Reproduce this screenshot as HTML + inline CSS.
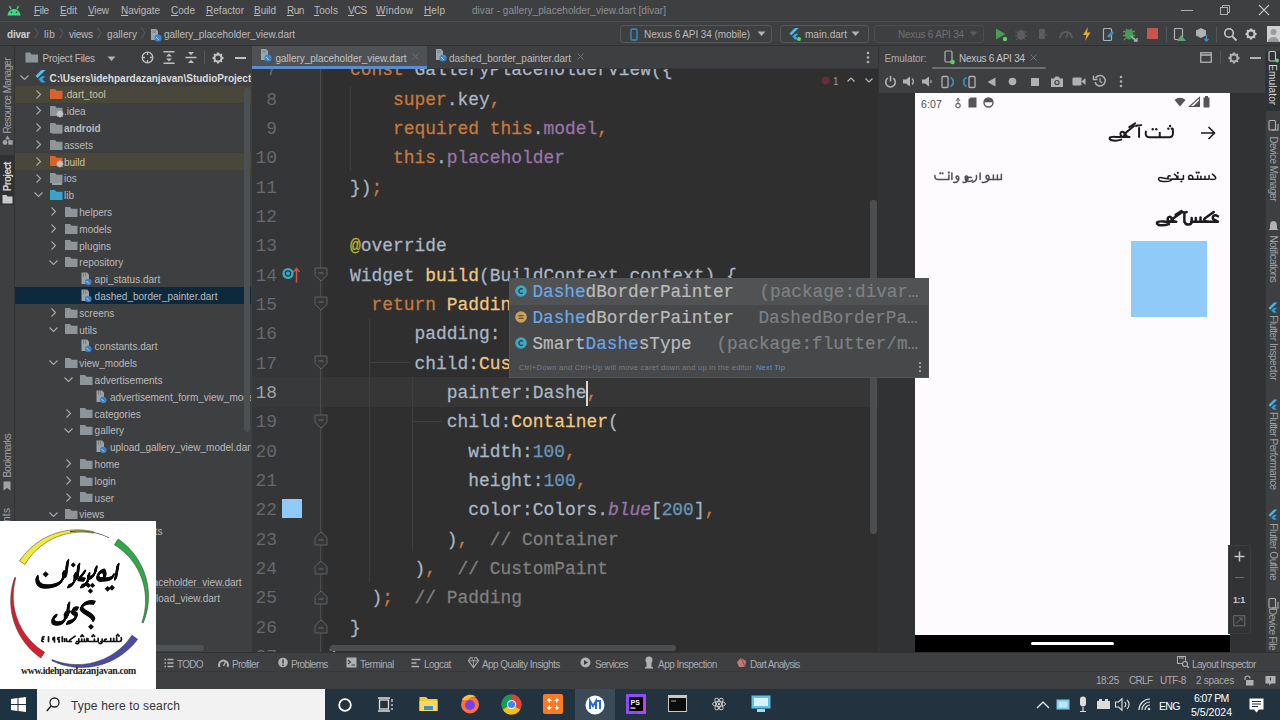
<!DOCTYPE html>
<html><head><meta charset="utf-8">
<style>
*{margin:0;padding:0;box-sizing:border-box}
html,body{width:1280px;height:720px;overflow:hidden;background:#3c3f41;font-family:"Liberation Sans",sans-serif;color:#bbbbbb;position:relative}
.a{position:absolute}
.t{position:absolute;white-space:pre}
svg{overflow:visible}
</style></head>
<body>
<div class="a" style="left:0px;top:0px;width:1280px;height:21px;background:#3e3f41;"></div>
<div class="a" style="left:0px;top:21px;width:1280px;height:25px;background:#3e3f41;"></div>
<div class="a" style="left:0px;top:21px;width:1280px;height:1px;background:#4a4d4f;"></div>
<div class="a" style="left:0px;top:45px;width:1280px;height:1px;background:#2f3133;"></div>
<div class="a" style="left:0px;top:46px;width:15px;height:606px;background:#3e3f41;"></div>
<div class="a" style="left:14px;top:46px;width:1px;height:606px;background:#323436;"></div>
<div class="a" style="left:15px;top:46px;width:237px;height:606px;background:#3e3f41;"></div>
<div class="a" style="left:252px;top:46px;width:627px;height:606px;background:#2f2f2f;"></div>
<div class="a" style="left:878px;top:46px;width:387px;height:606px;background:#313234;"></div>
<div class="a" style="left:878px;top:46px;width:1px;height:606px;background:#323436;"></div>
<div class="a" style="left:1265px;top:46px;width:15px;height:606px;background:#3e3f41;"></div>
<div class="a" style="left:1265px;top:46px;width:1px;height:606px;background:#323436;"></div>
<div class="a" style="left:0px;top:652px;width:1280px;height:19px;background:#3e3f41;"></div>
<div class="a" style="left:0px;top:652px;width:1280px;height:1px;background:#2f3133;"></div>
<div class="a" style="left:0px;top:671px;width:1280px;height:18px;background:#3e3f41;"></div>
<div class="a" style="left:0px;top:671px;width:1280px;height:1px;background:#36383a;"></div>
<div class="a" style="left:0px;top:689px;width:1280px;height:31px;background:#22323f;"></div>
<svg class="a" style="left:6px;top:5px;" width="16" height="11" viewBox="0 0 16 11"><path d="M1.5 10.5 A6.5 6.5 0 0 1 14.5 10.5 Z" fill="#3ddc84"/><line x1="3.5" y1="1" x2="5" y2="4" stroke="#3ddc84" stroke-width="1.2"/><line x1="12.5" y1="1" x2="11" y2="4" stroke="#3ddc84" stroke-width="1.2"/><circle cx="5.5" cy="7.3" r="0.9" fill="#3c3f41"/><circle cx="10.5" cy="7.3" r="0.9" fill="#3c3f41"/></svg>
<div class="t" style="left:34.00px;top:6.03px;font-size:10.00px;line-height:10.00px;color:#bbbbbb;font-family:'Liberation Sans',sans-serif;letter-spacing:-0.318px;"><u style="text-decoration-thickness:1px;text-underline-offset:1px">F</u>ile</div>
<div class="t" style="left:60.00px;top:6.03px;font-size:10.00px;line-height:10.00px;color:#bbbbbb;font-family:'Liberation Sans',sans-serif;letter-spacing:-0.066px;"><u style="text-decoration-thickness:1px;text-underline-offset:1px">E</u>dit</div>
<div class="t" style="left:88.00px;top:6.03px;font-size:10.00px;line-height:10.00px;color:#bbbbbb;font-family:'Liberation Sans',sans-serif;letter-spacing:-0.142px;"><u style="text-decoration-thickness:1px;text-underline-offset:1px">V</u>iew</div>
<div class="t" style="left:121.00px;top:6.03px;font-size:10.00px;line-height:10.00px;color:#bbbbbb;font-family:'Liberation Sans',sans-serif;letter-spacing:-0.062px;"><u style="text-decoration-thickness:1px;text-underline-offset:1px">N</u>avigate</div>
<div class="t" style="left:171.00px;top:6.03px;font-size:10.00px;line-height:10.00px;color:#bbbbbb;font-family:'Liberation Sans',sans-serif;letter-spacing:0.027px;"><u style="text-decoration-thickness:1px;text-underline-offset:1px">C</u>ode</div>
<div class="t" style="left:206.00px;top:6.03px;font-size:10.00px;line-height:10.00px;color:#bbbbbb;font-family:'Liberation Sans',sans-serif;letter-spacing:0.027px;"><u style="text-decoration-thickness:1px;text-underline-offset:1px">R</u>efactor</div>
<div class="t" style="left:254.00px;top:6.03px;font-size:10.00px;line-height:10.00px;color:#bbbbbb;font-family:'Liberation Sans',sans-serif;letter-spacing:-0.053px;"><u style="text-decoration-thickness:1px;text-underline-offset:1px">B</u>uild</div>
<div class="t" style="left:287.00px;top:6.03px;font-size:10.00px;line-height:10.00px;color:#bbbbbb;font-family:'Liberation Sans',sans-serif;letter-spacing:-0.538px;"><u style="text-decoration-thickness:1px;text-underline-offset:1px">R</u>un</div>
<div class="t" style="left:314.00px;top:6.03px;font-size:10.00px;line-height:10.00px;color:#bbbbbb;font-family:'Liberation Sans',sans-serif;letter-spacing:0.145px;"><u style="text-decoration-thickness:1px;text-underline-offset:1px">T</u>ools</div>
<div class="t" style="left:348.00px;top:6.03px;font-size:10.00px;line-height:10.00px;color:#bbbbbb;font-family:'Liberation Sans',sans-serif;letter-spacing:-0.700px;"><u style="text-decoration-thickness:1px;text-underline-offset:1px">V</u>CS</div>
<div class="t" style="left:376.00px;top:6.03px;font-size:10.00px;line-height:10.00px;color:#bbbbbb;font-family:'Liberation Sans',sans-serif;letter-spacing:0.261px;"><u style="text-decoration-thickness:1px;text-underline-offset:1px">W</u>indow</div>
<div class="t" style="left:424.00px;top:6.03px;font-size:10.00px;line-height:10.00px;color:#bbbbbb;font-family:'Liberation Sans',sans-serif;letter-spacing:0.124px;"><u style="text-decoration-thickness:1px;text-underline-offset:1px">H</u>elp</div>
<div class="t" style="left:472.00px;top:6.03px;font-size:10.00px;line-height:10.00px;color:#8e9092;font-family:'Liberation Sans',sans-serif;letter-spacing:0.038px;">divar - gallery_placeholder_view.dart [divar]</div>
<div class="a" style="left:1181px;top:10px;width:12px;height:1px;background:#b0b0b0;"></div>
<svg class="a" style="left:1219px;top:4px;" width="12" height="12" viewBox="0 0 12 12"><rect x="1.5" y="3.5" width="7" height="7" fill="none" stroke="#b0b0b0"/><path d="M3.5 3.5 V1.5 H10.5 V8.5 H8.5" fill="none" stroke="#b0b0b0"/></svg>
<svg class="a" style="left:1258px;top:4px;" width="12" height="12" viewBox="0 0 12 12"><path d="M1 1 L11 11 M11 1 L1 11" stroke="#c0c0c0" stroke-width="1.1"/></svg>
<div class="t" style="left:7.00px;top:29.53px;font-size:10.00px;line-height:10.00px;color:#d0d0d0;font-family:'Liberation Sans',sans-serif;font-weight:bold;letter-spacing:-0.200px;">divar</div>
<svg class="a" style="left:34px;top:27px;" width="5" height="12" viewBox="0 0 5 12"><path d="M0.5 0.5 L4 6 L0.5 11.5" fill="none" stroke="#5a5d5f" stroke-width="1"/></svg>
<div class="t" style="left:44.00px;top:29.53px;font-size:10.00px;line-height:10.00px;color:#bbbbbb;font-family:'Liberation Sans',sans-serif;letter-spacing:0.398px;">lib</div>
<svg class="a" style="left:59px;top:27px;" width="5" height="12" viewBox="0 0 5 12"><path d="M0.5 0.5 L4 6 L0.5 11.5" fill="none" stroke="#5a5d5f" stroke-width="1"/></svg>
<div class="t" style="left:69.00px;top:29.53px;font-size:10.00px;line-height:10.00px;color:#bbbbbb;font-family:'Liberation Sans',sans-serif;letter-spacing:-0.223px;">views</div>
<svg class="a" style="left:97px;top:27px;" width="5" height="12" viewBox="0 0 5 12"><path d="M0.5 0.5 L4 6 L0.5 11.5" fill="none" stroke="#5a5d5f" stroke-width="1"/></svg>
<div class="t" style="left:107.00px;top:29.53px;font-size:10.00px;line-height:10.00px;color:#bbbbbb;font-family:'Liberation Sans',sans-serif;letter-spacing:0.083px;">gallery</div>
<svg class="a" style="left:141px;top:27px;" width="5" height="12" viewBox="0 0 5 12"><path d="M0.5 0.5 L4 6 L0.5 11.5" fill="none" stroke="#5a5d5f" stroke-width="1"/></svg>
<svg class="a" style="left:150px;top:28px;" width="12" height="14" viewBox="0 0 12 14"><path d="M1 1 H6 L8 3 V12 H1 Z" fill="#9aa7b0"/><path d="M3 2 V5 M5 2 V5" stroke="#6e7a82" stroke-width="0.8"/><circle cx="8" cy="10" r="3.6" fill="#3e86c6"/><path d="M6.2 9 L8.6 11.8" stroke="#cde" stroke-width="0.9"/></svg>
<div class="t" style="left:164.00px;top:29.53px;font-size:10.00px;line-height:10.00px;color:#bbbbbb;font-family:'Liberation Sans',sans-serif;letter-spacing:-0.026px;">gallery_placeholder_view.dart</div>
<div class="a" style="left:620px;top:25px;width:152px;height:18px;background:transparent;border:1px solid #555759;border-radius:3px"></div>
<svg class="a" style="left:630px;top:28px;" width="8" height="13" viewBox="0 0 8 13"><rect x="1" y="1" width="6" height="11" rx="1.2" fill="none" stroke="#3592c4" stroke-width="1.3"/></svg>
<div class="t" style="left:644.00px;top:30.03px;font-size:10.00px;line-height:10.00px;color:#bbbbbb;font-family:'Liberation Sans',sans-serif;letter-spacing:-0.081px;">Nexus 6 API 34 (mobile)</div>
<svg class="a" style="left:757px;top:31px;" width="9" height="6" viewBox="0 0 9 6"><path d="M0.5 0.5 H8.5 L4.5 5 Z" fill="#afb1b3"/></svg>
<div class="a" style="left:780px;top:25px;width:89px;height:18px;background:transparent;border:1px solid #555759;border-radius:3px"></div>
<svg class="a" style="left:788px;top:27px;" width="14" height="14" viewBox="0 0 14 14"><path d="M7 1 L1.5 6.5 L3.3 8.3 L10.6 1 Z" fill="#40c4ff"/><path d="M7 6.8 L4.2 9.6 L7 12.4 H10.6 L7.8 9.6 L10.6 6.8 Z" fill="#3aa0d8"/><circle cx="11" cy="12" r="2" fill="#59d65f"/></svg>
<div class="t" style="left:805.00px;top:30.03px;font-size:10.00px;line-height:10.00px;color:#bbbbbb;font-family:'Liberation Sans',sans-serif;letter-spacing:0.037px;">main.dart</div>
<svg class="a" style="left:851px;top:31px;" width="9" height="6" viewBox="0 0 9 6"><path d="M0.5 0.5 H8.5 L4.5 5 Z" fill="#afb1b3"/></svg>
<div class="a" style="left:874px;top:25px;width:110px;height:18px;background:transparent;border:1px solid #4a4c4e;border-radius:3px"></div>
<div class="t" style="left:898.00px;top:30.03px;font-size:10.00px;line-height:10.00px;color:#6e7072;font-family:'Liberation Sans',sans-serif;letter-spacing:-0.217px;">Nexus 6 API 34</div>
<svg class="a" style="left:969px;top:31px;" width="9" height="6" viewBox="0 0 9 6"><path d="M0.5 0.5 H8.5 L4.5 5 Z" fill="#5a5c5e"/></svg>
<svg class="a" style="left:994px;top:27px;" width="14" height="15" viewBox="0 0 14 15"><path d="M2 1.5 L11.5 7 L2 12.5 Z" fill="#499c54"/><circle cx="11" cy="12" r="2.2" fill="#59d65f"/></svg>
<svg class="a" style="left:1014px;top:27px;" width="14" height="14" viewBox="0 0 14 14"><ellipse cx="7" cy="8" rx="4" ry="5" fill="#5a5c5e"/><path d="M1 5 H13 M1 9 H13 M2 13 L4 11 M12 13 L10 11" stroke="#5a5c5e"/></svg>
<svg class="a" style="left:1036px;top:27px;" width="14" height="14" viewBox="0 0 14 14"><path d="M3 2 H9 V12 H3 Z" fill="#5a5c5e"/><path d="M8 5 L12 8 L8 11" fill="#4e5052"/></svg>
<svg class="a" style="left:1058px;top:28px;" width="16" height="12" viewBox="0 0 16 12"><path d="M2 10 A6 6 0 0 1 14 10" fill="none" stroke="#5a5c5e" stroke-width="2"/><path d="M8 10 L10 5" stroke="#5a5c5e" stroke-width="1.5"/></svg>
<svg class="a" style="left:1081px;top:26px;" width="11" height="16" viewBox="0 0 11 16"><path d="M7 1 L2 9 H5.5 L4 15 L9.5 6.5 H6 Z" fill="#f0a732"/></svg>
<svg class="a" style="left:1102px;top:27px;" width="13" height="15" viewBox="0 0 13 15"><rect x="1.5" y="1.5" width="8" height="12" rx="1" fill="none" stroke="#afb1b3" stroke-width="1.2"/><path d="M10 4 L5 9 L7 11 L12 6" fill="#3592c4"/></svg>
<svg class="a" style="left:1122px;top:26px;" width="16" height="16" viewBox="0 0 16 16"><ellipse cx="7" cy="8.5" rx="4" ry="5" fill="#499c54"/><path d="M1 5.5 H13 M1 9.5 H13 M2 14 L4 12 M12 14 L10 12 M4 3 L6 5 M10 3 L8 5" stroke="#499c54" stroke-width="1.3"/><path d="M9 10 L15 15 M12 15 H15 V12" stroke="#afb1b3" stroke-width="1.3" fill="none"/></svg>
<div class="a" style="left:1147px;top:28px;width:11px;height:11px;background:#c75450;"></div>
<div class="a" style="left:1166px;top:27px;width:1px;height:15px;background:#515658;"></div>
<svg class="a" style="left:1173px;top:27px;" width="14" height="15" viewBox="0 0 14 15"><rect x="1.5" y="1.5" width="8" height="11" rx="1" fill="none" stroke="#afb1b3" stroke-width="1.2"/><path d="M4 14 L8 8 L13 14 Z" fill="#59a869"/></svg>
<svg class="a" style="left:1195px;top:27px;" width="15" height="15" viewBox="0 0 15 15"><path d="M6 1 L11 3.5 V8.5 L6 11 L1 8.5 V3.5 Z" fill="#afb1b3"/><path d="M11.5 8 V14 M9.5 12 L11.5 14 L13.5 12" stroke="#3592c4" stroke-width="1.4" fill="none"/></svg>
<div class="a" style="left:1216px;top:27px;width:1px;height:15px;background:#515658;"></div>
<svg class="a" style="left:1223px;top:27px;" width="15" height="15" viewBox="0 0 15 15"><circle cx="6" cy="6" r="4.3" fill="none" stroke="#c8c8c8" stroke-width="1.6"/><path d="M9.2 9.2 L13.5 13.5" stroke="#c8c8c8" stroke-width="1.8"/></svg>
<svg class="a" style="left:1245px;top:28px;" width="12" height="12" viewBox="0 0 12 12"><g transform="scale(1.0)"><circle cx="6" cy="6" r="3.6" fill="none" stroke="#c8c8c8" stroke-width="2.2" stroke-dasharray="0"/><path d="M6 0.5 V2.5 M6 9.5 V11.5 M0.5 6 H2.5 M9.5 6 H11.5 M2.1 2.1 L3.5 3.5 M8.5 8.5 L9.9 9.9 M2.1 9.9 L3.5 8.5 M8.5 3.5 L9.9 2.1" stroke="#c8c8c8" stroke-width="2"/><circle cx="6" cy="6" r="1.4" fill="#3c3f41"/></g></svg>
<svg class="a" style="left:1267px;top:26px;" width="13" height="16" viewBox="0 0 13 16"><rect x="0" y="0" width="13" height="16" fill="#d0d0d0"/><circle cx="6.5" cy="6" r="3" fill="#9a9a9a"/><path d="M1 16 A5.5 5 0 0 1 12 16" fill="#9a9a9a"/></svg>
<div class="t" style="left:-30.35px;top:89.75px;width:75.71px;height:11.50px;font-size:10px;line-height:11.50px;color:#9fa1a3;transform:rotate(-90deg);transform-origin:50% 50%;letter-spacing:-0.584px;">Resource Manager</div>
<svg class="a" style="left:2px;top:135px;" width="11" height="10" viewBox="0 0 11 10"><path d="M5.5 0.5 L8 4.5 H3 Z" fill="#9fa1a3"/><circle cx="3" cy="7.5" r="2.4" fill="#9fa1a3"/><rect x="6.2" y="5.2" width="4.5" height="4.5" fill="#9fa1a3"/></svg>
<div class="a" style="left:0px;top:155px;width:14px;height:50px;background:#2f3234;"></div>
<div class="t" style="left:-7.00px;top:170.75px;width:29.00px;height:11.50px;font-size:10px;line-height:11.50px;color:#d6d6d6;transform:rotate(-90deg);transform-origin:50% 50%;letter-spacing:-0.700px;font-weight:bold;">Project</div>
<svg class="a" style="left:2px;top:194px;" width="11" height="10" viewBox="0 0 11 10"><path d="M0.5 1 H4.5 L5.5 2.5 H10.5 V9.5 H0.5 Z" fill="#c9c9c9"/></svg>
<div class="t" style="left:-14.36px;top:449.50px;width:43.72px;height:11.50px;font-size:10px;line-height:11.50px;color:#9fa1a3;transform:rotate(-90deg);transform-origin:50% 50%;letter-spacing:-0.700px;">Bookmarks</div>
<svg class="a" style="left:3px;top:481px;" width="8" height="10" viewBox="0 0 8 10"><path d="M0.5 0.5 H7.5 V9.5 L4 7 L0.5 9.5 Z" fill="#9fa1a3"/></svg>
<div class="t" style="left:-25.59px;top:535.25px;width:66.19px;height:11.50px;font-size:10px;line-height:11.50px;color:#9fa1a3;transform:rotate(-90deg);transform-origin:50% 50%;letter-spacing:0.373px;">Build Variants</div>
<svg class="a" style="left:25px;top:52px;" width="14" height="11" viewBox="0 0 14 11"><path d="M0.5 0.5 H5 L6.5 2.5 H13 V10.5 H0.5 Z" fill="#8d9599"/></svg>
<div class="t" style="left:42.50px;top:53.53px;font-size:10.00px;line-height:10.00px;color:#bbbbbb;font-family:'Liberation Sans',sans-serif;letter-spacing:-0.201px;">Project Files</div>
<svg class="a" style="left:107px;top:56px;" width="9" height="6" viewBox="0 0 9 6"><path d="M0.5 0.5 H8.5 L4.5 5 Z" fill="#afb1b3"/></svg>
<svg class="a" style="left:141px;top:51px;" width="13" height="13" viewBox="0 0 13 13"><circle cx="6.5" cy="6.5" r="5.3" fill="none" stroke="#c0c0c0" stroke-width="1.3"/><path d="M6.5 1.2 V4 M6.5 9 V11.8 M1.2 6.5 H4 M9 6.5 H11.8" stroke="#c0c0c0" stroke-width="1.3"/></svg>
<svg class="a" style="left:163px;top:51px;" width="12" height="13" viewBox="0 0 12 13"><path d="M0.5 0.8 H11.5 M0.5 12.2 H11.5" stroke="#c0c0c0" stroke-width="1.5"/><path d="M3 5.5 L6 2.5 L9 5.5 Z M3 7.5 L6 10.5 L9 7.5 Z" fill="#c0c0c0"/></svg>
<svg class="a" style="left:185px;top:51px;" width="12" height="13" viewBox="0 0 12 13"><path d="M0.5 6.5 H11.5" stroke="#c0c0c0" stroke-width="1.5"/><path d="M3 1 H9 L6 4.3 Z M3 12 H9 L6 8.7 Z" fill="#c0c0c0"/></svg>
<div class="a" style="left:204px;top:51px;width:1px;height:13px;background:#55585a;"></div>
<svg class="a" style="left:212px;top:52px;" width="12" height="12" viewBox="0 0 12 12"><g transform="scale(1.0)"><circle cx="6" cy="6" r="3.6" fill="none" stroke="#c0c0c0" stroke-width="2.2" stroke-dasharray="0"/><path d="M6 0.5 V2.5 M6 9.5 V11.5 M0.5 6 H2.5 M9.5 6 H11.5 M2.1 2.1 L3.5 3.5 M8.5 8.5 L9.9 9.9 M2.1 9.9 L3.5 8.5 M8.5 3.5 L9.9 2.1" stroke="#c0c0c0" stroke-width="2"/><circle cx="6" cy="6" r="1.4" fill="#3c3f41"/></g></svg>
<div class="a" style="left:235px;top:57px;width:11px;height:1.6px;background:#c0c0c0;"></div>
<div class="a" style="left:15px;top:69px;width:236px;height:583px;overflow:hidden">
<div class="a" style="left:0px;top:16.599999999999994px;width:236px;height:17px;background:#49473a;"></div>
<div class="a" style="left:0px;top:83.80000000000001px;width:236px;height:17px;background:#49473a;"></div>
<div class="a" style="left:0px;top:218.2px;width:236px;height:17px;background:#0d293e;"></div>
<svg class="a" style="left:4.5px;top:5.799999999999997px;" width="9" height="5" viewBox="0 0 9 5"><path d="M0.5 0.5 L4.5 4.5 L8.5 0.5" fill="none" stroke="#a8aaac" stroke-width="1.1"/></svg>
<svg class="a" style="left:20px;top:1.2999999999999972px;" width="11" height="14" viewBox="0 0 11 14"><path d="M6.5 0 L0.5 6 L2.5 8 L10.5 0 Z" fill="#48c4f6"/><path d="M6.5 6.2 L3.5 9.2 L6.5 12.5 H10.5 L7.3 9.2 L10.5 6.2 Z" fill="#2fa4e0"/></svg>
<div class="t" style="left:34.50px;top:4.63px;font-size:10.00px;line-height:10.00px;color:#dcdcdc;font-family:'Liberation Sans',sans-serif;font-weight:bold;">C:\Users\idehpardazanjavan\StudioProjects\divar</div>
<svg class="a" style="left:21.0px;top:20.599999999999994px;" width="5" height="9" viewBox="0 0 5 9"><path d="M0.5 0.5 L4.5 4.5 L0.5 8.5" fill="none" stroke="#a8aaac" stroke-width="1.1"/></svg>
<svg class="a" style="left:35px;top:20.099999999999994px;" width="13" height="10" viewBox="0 0 13 10"><path d="M0 0 H5 L6.5 1.8 H12.5 V10 H0 Z" fill="#d6622c"/></svg>
<div class="t" style="left:49.00px;top:21.43px;font-size:10.00px;line-height:10.00px;color:#c9c3a6;font-family:'Liberation Sans',sans-serif;">.dart_tool</div>
<svg class="a" style="left:21.0px;top:37.400000000000006px;" width="5" height="9" viewBox="0 0 5 9"><path d="M0.5 0.5 L4.5 4.5 L0.5 8.5" fill="none" stroke="#a8aaac" stroke-width="1.1"/></svg>
<svg class="a" style="left:35px;top:36.900000000000006px;" width="13" height="10" viewBox="0 0 13 10"><path d="M0 0 H5 L6.5 1.8 H12.5 V10 H0 Z" fill="#8d9599"/></svg>
<svg class="a" style="left:41px;top:40.900000000000006px;" width="8" height="8" viewBox="0 0 8 8"><circle cx="4" cy="4" r="2.2" fill="none" stroke="#c8c8c8" stroke-width="1.4"/><path d="M4 0.3 V7.7 M0.3 4 H7.7 M1.4 1.4 L6.6 6.6 M6.6 1.4 L1.4 6.6" stroke="#c8c8c8" stroke-width="0.9"/></svg>
<div class="t" style="left:49.00px;top:38.23px;font-size:10.00px;line-height:10.00px;color:#bbbbbb;font-family:'Liberation Sans',sans-serif;">.idea</div>
<svg class="a" style="left:21.0px;top:54.2px;" width="5" height="9" viewBox="0 0 5 9"><path d="M0.5 0.5 L4.5 4.5 L0.5 8.5" fill="none" stroke="#a8aaac" stroke-width="1.1"/></svg>
<svg class="a" style="left:35px;top:53.7px;" width="13" height="10" viewBox="0 0 13 10"><path d="M0 0 H5 L6.5 1.8 H12.5 V10 H0 Z" fill="#8d9599"/></svg>
<div class="a" style="left:37px;top:63.69999999999999px;width:10px;height:1.5px;background:#3a9a5a;"></div>
<div class="t" style="left:49.00px;top:55.03px;font-size:10.00px;line-height:10.00px;color:#bbbbbb;font-family:'Liberation Sans',sans-serif;font-weight:bold;">android</div>
<svg class="a" style="left:21.0px;top:71.0px;" width="5" height="9" viewBox="0 0 5 9"><path d="M0.5 0.5 L4.5 4.5 L0.5 8.5" fill="none" stroke="#a8aaac" stroke-width="1.1"/></svg>
<svg class="a" style="left:35px;top:70.5px;" width="13" height="10" viewBox="0 0 13 10"><path d="M0 0 H5 L6.5 1.8 H12.5 V10 H0 Z" fill="#8d9599"/></svg>
<div class="t" style="left:49.00px;top:71.83px;font-size:10.00px;line-height:10.00px;color:#bbbbbb;font-family:'Liberation Sans',sans-serif;">assets</div>
<svg class="a" style="left:21.0px;top:87.80000000000001px;" width="5" height="9" viewBox="0 0 5 9"><path d="M0.5 0.5 L4.5 4.5 L0.5 8.5" fill="none" stroke="#a8aaac" stroke-width="1.1"/></svg>
<svg class="a" style="left:35px;top:87.30000000000001px;" width="13" height="10" viewBox="0 0 13 10"><path d="M0 0 H5 L6.5 1.8 H12.5 V10 H0 Z" fill="#d6622c"/></svg>
<svg class="a" style="left:41px;top:91.30000000000001px;" width="8" height="8" viewBox="0 0 8 8"><circle cx="4" cy="4" r="2.2" fill="none" stroke="#c8c8c8" stroke-width="1.4"/><path d="M4 0.3 V7.7 M0.3 4 H7.7 M1.4 1.4 L6.6 6.6 M6.6 1.4 L1.4 6.6" stroke="#c8c8c8" stroke-width="0.9"/></svg>
<div class="t" style="left:49.00px;top:88.63px;font-size:10.00px;line-height:10.00px;color:#c9c3a6;font-family:'Liberation Sans',sans-serif;">build</div>
<svg class="a" style="left:21.0px;top:104.60000000000002px;" width="5" height="9" viewBox="0 0 5 9"><path d="M0.5 0.5 L4.5 4.5 L0.5 8.5" fill="none" stroke="#a8aaac" stroke-width="1.1"/></svg>
<svg class="a" style="left:35px;top:104.10000000000002px;" width="13" height="10" viewBox="0 0 13 10"><path d="M0 0 H5 L6.5 1.8 H12.5 V10 H0 Z" fill="#8d9599"/></svg>
<div class="a" style="left:37px;top:114.10000000000002px;width:10px;height:1.5px;background:#9aa0a4;"></div>
<div class="t" style="left:49.00px;top:105.43px;font-size:10.00px;line-height:10.00px;color:#bbbbbb;font-family:'Liberation Sans',sans-serif;">ios</div>
<svg class="a" style="left:19.0px;top:123.4px;" width="9" height="5" viewBox="0 0 9 5"><path d="M0.5 0.5 L4.5 4.5 L8.5 0.5" fill="none" stroke="#a8aaac" stroke-width="1.1"/></svg>
<svg class="a" style="left:35px;top:120.9px;" width="13" height="10" viewBox="0 0 13 10"><path d="M0 0 H5 L6.5 1.8 H12.5 V10 H0 Z" fill="#3aa3c9"/></svg>
<div class="t" style="left:49.00px;top:122.23px;font-size:10.00px;line-height:10.00px;color:#bbbbbb;font-family:'Liberation Sans',sans-serif;">lib</div>
<svg class="a" style="left:36.0px;top:138.2px;" width="5" height="9" viewBox="0 0 5 9"><path d="M0.5 0.5 L4.5 4.5 L0.5 8.5" fill="none" stroke="#a8aaac" stroke-width="1.1"/></svg>
<svg class="a" style="left:50px;top:137.7px;" width="13" height="10" viewBox="0 0 13 10"><path d="M0 0 H5 L6.5 1.8 H12.5 V10 H0 Z" fill="#8d9599"/></svg>
<div class="t" style="left:64.30px;top:139.03px;font-size:10.00px;line-height:10.00px;color:#bbbbbb;font-family:'Liberation Sans',sans-serif;">helpers</div>
<svg class="a" style="left:36.0px;top:155.0px;" width="5" height="9" viewBox="0 0 5 9"><path d="M0.5 0.5 L4.5 4.5 L0.5 8.5" fill="none" stroke="#a8aaac" stroke-width="1.1"/></svg>
<svg class="a" style="left:50px;top:154.5px;" width="13" height="10" viewBox="0 0 13 10"><path d="M0 0 H5 L6.5 1.8 H12.5 V10 H0 Z" fill="#8d9599"/></svg>
<div class="t" style="left:64.30px;top:155.83px;font-size:10.00px;line-height:10.00px;color:#bbbbbb;font-family:'Liberation Sans',sans-serif;">models</div>
<svg class="a" style="left:36.0px;top:171.8px;" width="5" height="9" viewBox="0 0 5 9"><path d="M0.5 0.5 L4.5 4.5 L0.5 8.5" fill="none" stroke="#a8aaac" stroke-width="1.1"/></svg>
<svg class="a" style="left:50px;top:171.3px;" width="13" height="10" viewBox="0 0 13 10"><path d="M0 0 H5 L6.5 1.8 H12.5 V10 H0 Z" fill="#8d9599"/></svg>
<div class="t" style="left:64.30px;top:172.63px;font-size:10.00px;line-height:10.00px;color:#bbbbbb;font-family:'Liberation Sans',sans-serif;">plugins</div>
<svg class="a" style="left:34.0px;top:190.60000000000002px;" width="9" height="5" viewBox="0 0 9 5"><path d="M0.5 0.5 L4.5 4.5 L8.5 0.5" fill="none" stroke="#a8aaac" stroke-width="1.1"/></svg>
<svg class="a" style="left:50px;top:188.10000000000002px;" width="13" height="10" viewBox="0 0 13 10"><path d="M0 0 H5 L6.5 1.8 H12.5 V10 H0 Z" fill="#8d9599"/></svg>
<div class="t" style="left:64.30px;top:189.43px;font-size:10.00px;line-height:10.00px;color:#bbbbbb;font-family:'Liberation Sans',sans-serif;">repository</div>
<svg class="a" style="left:66px;top:202.90000000000003px;" width="11" height="14" viewBox="0 0 11 14"><path d="M0.5 0.5 H6 L8 2.5 V12 H0.5 Z" fill="#9aa3a8"/><path d="M2.5 1 V5 M4.5 1 V5" stroke="#6a7276" stroke-width="0.7"/><circle cx="7.3" cy="10" r="3.3" fill="#3d7fc0"/><path d="M5.6 9.1 L8 11.5" stroke="#dbe8f5" stroke-width="0.9"/></svg>
<div class="t" style="left:79.60px;top:206.23px;font-size:10.00px;line-height:10.00px;color:#bbbbbb;font-family:'Liberation Sans',sans-serif;">api_status.dart</div>
<svg class="a" style="left:66px;top:219.7px;" width="11" height="14" viewBox="0 0 11 14"><path d="M0.5 0.5 H6 L8 2.5 V12 H0.5 Z" fill="#9aa3a8"/><path d="M2.5 1 V5 M4.5 1 V5" stroke="#6a7276" stroke-width="0.7"/><circle cx="7.3" cy="10" r="3.3" fill="#3d7fc0"/><path d="M5.6 9.1 L8 11.5" stroke="#dbe8f5" stroke-width="0.9"/></svg>
<div class="t" style="left:79.60px;top:223.03px;font-size:10.00px;line-height:10.00px;color:#bbbbbb;font-family:'Liberation Sans',sans-serif;">dashed_border_painter.dart</div>
<svg class="a" style="left:36.0px;top:239.0px;" width="5" height="9" viewBox="0 0 5 9"><path d="M0.5 0.5 L4.5 4.5 L0.5 8.5" fill="none" stroke="#a8aaac" stroke-width="1.1"/></svg>
<svg class="a" style="left:50px;top:238.5px;" width="13" height="10" viewBox="0 0 13 10"><path d="M0 0 H5 L6.5 1.8 H12.5 V10 H0 Z" fill="#8d9599"/></svg>
<div class="t" style="left:64.30px;top:239.83px;font-size:10.00px;line-height:10.00px;color:#bbbbbb;font-family:'Liberation Sans',sans-serif;">screens</div>
<svg class="a" style="left:34.0px;top:257.8px;" width="9" height="5" viewBox="0 0 9 5"><path d="M0.5 0.5 L4.5 4.5 L8.5 0.5" fill="none" stroke="#a8aaac" stroke-width="1.1"/></svg>
<svg class="a" style="left:50px;top:255.3px;" width="13" height="10" viewBox="0 0 13 10"><path d="M0 0 H5 L6.5 1.8 H12.5 V10 H0 Z" fill="#8d9599"/></svg>
<div class="t" style="left:64.30px;top:256.63px;font-size:10.00px;line-height:10.00px;color:#bbbbbb;font-family:'Liberation Sans',sans-serif;">utils</div>
<svg class="a" style="left:66px;top:270.1px;" width="11" height="14" viewBox="0 0 11 14"><path d="M0.5 0.5 H6 L8 2.5 V12 H0.5 Z" fill="#9aa3a8"/><path d="M2.5 1 V5 M4.5 1 V5" stroke="#6a7276" stroke-width="0.7"/><circle cx="7.3" cy="10" r="3.3" fill="#3d7fc0"/><path d="M5.6 9.1 L8 11.5" stroke="#dbe8f5" stroke-width="0.9"/></svg>
<div class="t" style="left:79.60px;top:273.43px;font-size:10.00px;line-height:10.00px;color:#bbbbbb;font-family:'Liberation Sans',sans-serif;">constants.dart</div>
<svg class="a" style="left:34.0px;top:291.40000000000003px;" width="9" height="5" viewBox="0 0 9 5"><path d="M0.5 0.5 L4.5 4.5 L8.5 0.5" fill="none" stroke="#a8aaac" stroke-width="1.1"/></svg>
<svg class="a" style="left:50px;top:288.90000000000003px;" width="13" height="10" viewBox="0 0 13 10"><path d="M0 0 H5 L6.5 1.8 H12.5 V10 H0 Z" fill="#8d9599"/></svg>
<div class="t" style="left:64.30px;top:290.23px;font-size:10.00px;line-height:10.00px;color:#bbbbbb;font-family:'Liberation Sans',sans-serif;">view_models</div>
<svg class="a" style="left:49.0px;top:308.20000000000005px;" width="9" height="5" viewBox="0 0 9 5"><path d="M0.5 0.5 L4.5 4.5 L8.5 0.5" fill="none" stroke="#a8aaac" stroke-width="1.1"/></svg>
<svg class="a" style="left:65px;top:305.70000000000005px;" width="13" height="10" viewBox="0 0 13 10"><path d="M0 0 H5 L6.5 1.8 H12.5 V10 H0 Z" fill="#8d9599"/></svg>
<div class="t" style="left:79.60px;top:307.03px;font-size:10.00px;line-height:10.00px;color:#bbbbbb;font-family:'Liberation Sans',sans-serif;">advertisements</div>
<svg class="a" style="left:81px;top:320.5px;" width="11" height="14" viewBox="0 0 11 14"><path d="M0.5 0.5 H6 L8 2.5 V12 H0.5 Z" fill="#9aa3a8"/><path d="M2.5 1 V5 M4.5 1 V5" stroke="#6a7276" stroke-width="0.7"/><circle cx="7.3" cy="10" r="3.3" fill="#3d7fc0"/><path d="M5.6 9.1 L8 11.5" stroke="#dbe8f5" stroke-width="0.9"/></svg>
<div class="t" style="left:94.90px;top:323.83px;font-size:10.00px;line-height:10.00px;color:#bbbbbb;font-family:'Liberation Sans',sans-serif;">advertisement_form_view_model.dart</div>
<svg class="a" style="left:51.0px;top:339.8px;" width="5" height="9" viewBox="0 0 5 9"><path d="M0.5 0.5 L4.5 4.5 L0.5 8.5" fill="none" stroke="#a8aaac" stroke-width="1.1"/></svg>
<svg class="a" style="left:65px;top:339.3px;" width="13" height="10" viewBox="0 0 13 10"><path d="M0 0 H5 L6.5 1.8 H12.5 V10 H0 Z" fill="#8d9599"/></svg>
<div class="t" style="left:79.60px;top:340.63px;font-size:10.00px;line-height:10.00px;color:#bbbbbb;font-family:'Liberation Sans',sans-serif;">categories</div>
<svg class="a" style="left:49.0px;top:358.6px;" width="9" height="5" viewBox="0 0 9 5"><path d="M0.5 0.5 L4.5 4.5 L8.5 0.5" fill="none" stroke="#a8aaac" stroke-width="1.1"/></svg>
<svg class="a" style="left:65px;top:356.1px;" width="13" height="10" viewBox="0 0 13 10"><path d="M0 0 H5 L6.5 1.8 H12.5 V10 H0 Z" fill="#8d9599"/></svg>
<div class="t" style="left:79.60px;top:357.43px;font-size:10.00px;line-height:10.00px;color:#bbbbbb;font-family:'Liberation Sans',sans-serif;">gallery</div>
<svg class="a" style="left:81px;top:370.90000000000003px;" width="11" height="14" viewBox="0 0 11 14"><path d="M0.5 0.5 H6 L8 2.5 V12 H0.5 Z" fill="#9aa3a8"/><path d="M2.5 1 V5 M4.5 1 V5" stroke="#6a7276" stroke-width="0.7"/><circle cx="7.3" cy="10" r="3.3" fill="#3d7fc0"/><path d="M5.6 9.1 L8 11.5" stroke="#dbe8f5" stroke-width="0.9"/></svg>
<div class="t" style="left:94.90px;top:374.23px;font-size:10.00px;line-height:10.00px;color:#bbbbbb;font-family:'Liberation Sans',sans-serif;">upload_gallery_view_model.dart</div>
<svg class="a" style="left:51.0px;top:390.20000000000005px;" width="5" height="9" viewBox="0 0 5 9"><path d="M0.5 0.5 L4.5 4.5 L0.5 8.5" fill="none" stroke="#a8aaac" stroke-width="1.1"/></svg>
<svg class="a" style="left:65px;top:389.70000000000005px;" width="13" height="10" viewBox="0 0 13 10"><path d="M0 0 H5 L6.5 1.8 H12.5 V10 H0 Z" fill="#8d9599"/></svg>
<div class="t" style="left:79.60px;top:391.03px;font-size:10.00px;line-height:10.00px;color:#bbbbbb;font-family:'Liberation Sans',sans-serif;">home</div>
<svg class="a" style="left:51.0px;top:407.00000000000006px;" width="5" height="9" viewBox="0 0 5 9"><path d="M0.5 0.5 L4.5 4.5 L0.5 8.5" fill="none" stroke="#a8aaac" stroke-width="1.1"/></svg>
<svg class="a" style="left:65px;top:406.50000000000006px;" width="13" height="10" viewBox="0 0 13 10"><path d="M0 0 H5 L6.5 1.8 H12.5 V10 H0 Z" fill="#8d9599"/></svg>
<div class="t" style="left:79.60px;top:407.83px;font-size:10.00px;line-height:10.00px;color:#bbbbbb;font-family:'Liberation Sans',sans-serif;">login</div>
<svg class="a" style="left:51.0px;top:423.8px;" width="5" height="9" viewBox="0 0 5 9"><path d="M0.5 0.5 L4.5 4.5 L0.5 8.5" fill="none" stroke="#a8aaac" stroke-width="1.1"/></svg>
<svg class="a" style="left:65px;top:423.3px;" width="13" height="10" viewBox="0 0 13 10"><path d="M0 0 H5 L6.5 1.8 H12.5 V10 H0 Z" fill="#8d9599"/></svg>
<div class="t" style="left:79.60px;top:424.63px;font-size:10.00px;line-height:10.00px;color:#bbbbbb;font-family:'Liberation Sans',sans-serif;">user</div>
<svg class="a" style="left:34.0px;top:442.6px;" width="9" height="5" viewBox="0 0 9 5"><path d="M0.5 0.5 L4.5 4.5 L8.5 0.5" fill="none" stroke="#a8aaac" stroke-width="1.1"/></svg>
<svg class="a" style="left:50px;top:440.1px;" width="13" height="10" viewBox="0 0 13 10"><path d="M0 0 H5 L6.5 1.8 H12.5 V10 H0 Z" fill="#8d9599"/></svg>
<div class="t" style="left:64.30px;top:441.43px;font-size:10.00px;line-height:10.00px;color:#bbbbbb;font-family:'Liberation Sans',sans-serif;">views</div>
<svg class="a" style="left:51.0px;top:457.4px;" width="5" height="9" viewBox="0 0 5 9"><path d="M0.5 0.5 L4.5 4.5 L0.5 8.5" fill="none" stroke="#a8aaac" stroke-width="1.1"/></svg>
<svg class="a" style="left:65px;top:456.9px;" width="13" height="10" viewBox="0 0 13 10"><path d="M0 0 H5 L6.5 1.8 H12.5 V10 H0 Z" fill="#8d9599"/></svg>
<div class="t" style="left:79.60px;top:458.23px;font-size:10.00px;line-height:10.00px;color:#bbbbbb;font-family:'Liberation Sans',sans-serif;">advertisements</div>
<svg class="a" style="left:51.0px;top:474.20000000000005px;" width="5" height="9" viewBox="0 0 5 9"><path d="M0.5 0.5 L4.5 4.5 L0.5 8.5" fill="none" stroke="#a8aaac" stroke-width="1.1"/></svg>
<svg class="a" style="left:65px;top:473.70000000000005px;" width="13" height="10" viewBox="0 0 13 10"><path d="M0 0 H5 L6.5 1.8 H12.5 V10 H0 Z" fill="#8d9599"/></svg>
<div class="t" style="left:79.60px;top:475.03px;font-size:10.00px;line-height:10.00px;color:#bbbbbb;font-family:'Liberation Sans',sans-serif;">categories</div>
<svg class="a" style="left:49.0px;top:493.0px;" width="9" height="5" viewBox="0 0 9 5"><path d="M0.5 0.5 L4.5 4.5 L8.5 0.5" fill="none" stroke="#a8aaac" stroke-width="1.1"/></svg>
<svg class="a" style="left:65px;top:490.5px;" width="13" height="10" viewBox="0 0 13 10"><path d="M0 0 H5 L6.5 1.8 H12.5 V10 H0 Z" fill="#8d9599"/></svg>
<div class="t" style="left:79.60px;top:491.83px;font-size:10.00px;line-height:10.00px;color:#bbbbbb;font-family:'Liberation Sans',sans-serif;">gallery</div>
<svg class="a" style="left:81px;top:505.29999999999995px;" width="11" height="14" viewBox="0 0 11 14"><path d="M0.5 0.5 H6 L8 2.5 V12 H0.5 Z" fill="#9aa3a8"/><path d="M2.5 1 V5 M4.5 1 V5" stroke="#6a7276" stroke-width="0.7"/><circle cx="7.3" cy="10" r="3.3" fill="#3d7fc0"/><path d="M5.6 9.1 L8 11.5" stroke="#dbe8f5" stroke-width="0.9"/></svg>
<div class="t" style="left:94.90px;top:508.63px;font-size:10.00px;line-height:10.00px;color:#bbbbbb;font-family:'Liberation Sans',sans-serif;">gallery_placeholder_view.dart</div>
<div class="a" style="left:94.89999999999999px;top:518.3px;width:131px;height:1px;background:#8a3c4a;"></div>
<svg class="a" style="left:81px;top:522.1px;" width="11" height="14" viewBox="0 0 11 14"><path d="M0.5 0.5 H6 L8 2.5 V12 H0.5 Z" fill="#9aa3a8"/><path d="M2.5 1 V5 M4.5 1 V5" stroke="#6a7276" stroke-width="0.7"/><circle cx="7.3" cy="10" r="3.3" fill="#3d7fc0"/><path d="M5.6 9.1 L8 11.5" stroke="#dbe8f5" stroke-width="0.9"/></svg>
<div class="t" style="left:94.90px;top:525.43px;font-size:10.00px;line-height:10.00px;color:#bbbbbb;font-family:'Liberation Sans',sans-serif;">gallery_upload_view.dart</div>
</div>
<div class="a" style="left:244px;top:88px;width:6px;height:344px;background:#4d5052;border-radius:3px"></div>
<div class="a" style="left:20px;top:645px;width:184px;height:6px;background:#505355;border-radius:3px"></div>
<div class="a" style="left:252px;top:46px;width:626px;height:23px;background:#3e3f41;"></div>
<div class="a" style="left:252px;top:68px;width:626px;height:1px;background:#36373a;"></div>
<div class="a" style="left:252px;top:46px;width:175px;height:20px;background:#4e5254;"></div>
<div class="a" style="left:252px;top:65.5px;width:175px;height:3.5px;background:#5b8bd0;"></div>
<svg class="a" style="left:260px;top:48px;" width="12" height="14" viewBox="0 0 12 14"><path d="M1 1 H6 L8 3 V12 H1 Z" fill="#9aa7b0"/><path d="M3 2 V5 M5 2 V5" stroke="#6e7a82" stroke-width="0.8"/><circle cx="8" cy="10" r="3.6" fill="#3e86c6"/><path d="M6.2 9 L8.6 11.8" stroke="#cde" stroke-width="0.9"/></svg>
<div class="t" style="left:275.50px;top:54.03px;font-size:10.00px;line-height:10.00px;color:#c4c4c4;font-family:'Liberation Sans',sans-serif;letter-spacing:-0.026px;">gallery_placeholder_view.dart</div>
<svg class="a" style="left:412px;top:53px;" width="7" height="7" viewBox="0 0 7 7"><path d="M0.5 0.5 L6.5 6.5 M6.5 0.5 L0.5 6.5" stroke="#6f7274" stroke-width="1"/></svg>
<svg class="a" style="left:435px;top:48px;" width="12" height="14" viewBox="0 0 12 14"><path d="M1 1 H6 L8 3 V12 H1 Z" fill="#9aa7b0"/><path d="M3 2 V5 M5 2 V5" stroke="#6e7a82" stroke-width="0.8"/><circle cx="8" cy="10" r="3.6" fill="#3e86c6"/><path d="M6.2 9 L8.6 11.8" stroke="#cde" stroke-width="0.9"/></svg>
<div class="t" style="left:449.00px;top:54.03px;font-size:10.00px;line-height:10.00px;color:#bbbbbb;font-family:'Liberation Sans',sans-serif;letter-spacing:-0.034px;">dashed_border_painter.dart</div>
<svg class="a" style="left:577px;top:53px;" width="7" height="7" viewBox="0 0 7 7"><path d="M0.5 0.5 L6.5 6.5 M6.5 0.5 L0.5 6.5" stroke="#6f7274" stroke-width="1"/></svg>
<svg class="a" style="left:866px;top:51px;" width="4" height="13" viewBox="0 0 4 13"><circle cx="2" cy="2" r="1.3" fill="#afb1b3"/><circle cx="2" cy="6.5" r="1.3" fill="#afb1b3"/><circle cx="2" cy="11" r="1.3" fill="#afb1b3"/></svg>
<div class="a" style="left:252px;top:69px;width:626px;height:583px;overflow:hidden;background:#2f2f2f">
<div class="a" style="left:0px;top:0px;width:70.5px;height:583px;background:#353638;"></div>
<div class="a" style="left:70.5px;top:307.99999999999994px;width:556px;height:29.6px;background:#363636;"></div>
<div class="a" style="left:0px;top:307.99999999999994px;width:70.5px;height:29.6px;background:#38393b;"></div>
<div class="a" style="left:68px;top:0px;width:1.2px;height:583px;background:#4a4b4d;"></div>
<div class="t" style="left:14.25px;top:-6.76px;font-size:17.92px;line-height:17.92px;color:#66696b;font-family:'Liberation Mono',monospace;">7</div>
<div class="t" style="left:14.25px;top:22.57px;font-size:17.92px;line-height:17.92px;color:#66696b;font-family:'Liberation Mono',monospace;">8</div>
<div class="t" style="left:14.25px;top:51.90px;font-size:17.92px;line-height:17.92px;color:#66696b;font-family:'Liberation Mono',monospace;">9</div>
<div class="t" style="left:3.49px;top:81.23px;font-size:17.92px;line-height:17.92px;color:#66696b;font-family:'Liberation Mono',monospace;">10</div>
<div class="t" style="left:3.49px;top:110.56px;font-size:17.92px;line-height:17.92px;color:#66696b;font-family:'Liberation Mono',monospace;">11</div>
<div class="t" style="left:3.49px;top:139.89px;font-size:17.92px;line-height:17.92px;color:#66696b;font-family:'Liberation Mono',monospace;">12</div>
<div class="t" style="left:3.49px;top:169.22px;font-size:17.92px;line-height:17.92px;color:#66696b;font-family:'Liberation Mono',monospace;">13</div>
<div class="t" style="left:3.49px;top:198.55px;font-size:17.92px;line-height:17.92px;color:#66696b;font-family:'Liberation Mono',monospace;">14</div>
<div class="t" style="left:3.49px;top:227.88px;font-size:17.92px;line-height:17.92px;color:#66696b;font-family:'Liberation Mono',monospace;">15</div>
<div class="t" style="left:3.49px;top:257.21px;font-size:17.92px;line-height:17.92px;color:#66696b;font-family:'Liberation Mono',monospace;">16</div>
<div class="t" style="left:3.49px;top:286.54px;font-size:17.92px;line-height:17.92px;color:#66696b;font-family:'Liberation Mono',monospace;">17</div>
<div class="t" style="left:3.49px;top:315.87px;font-size:17.92px;line-height:17.92px;color:#a4a3a3;font-family:'Liberation Mono',monospace;">18</div>
<div class="t" style="left:3.49px;top:345.20px;font-size:17.92px;line-height:17.92px;color:#66696b;font-family:'Liberation Mono',monospace;">19</div>
<div class="t" style="left:3.49px;top:374.53px;font-size:17.92px;line-height:17.92px;color:#66696b;font-family:'Liberation Mono',monospace;">20</div>
<div class="t" style="left:3.49px;top:403.86px;font-size:17.92px;line-height:17.92px;color:#66696b;font-family:'Liberation Mono',monospace;">21</div>
<div class="t" style="left:3.49px;top:433.19px;font-size:17.92px;line-height:17.92px;color:#66696b;font-family:'Liberation Mono',monospace;">22</div>
<div class="t" style="left:3.49px;top:462.52px;font-size:17.92px;line-height:17.92px;color:#66696b;font-family:'Liberation Mono',monospace;">23</div>
<div class="t" style="left:3.49px;top:491.85px;font-size:17.92px;line-height:17.92px;color:#66696b;font-family:'Liberation Mono',monospace;">24</div>
<div class="t" style="left:3.49px;top:521.18px;font-size:17.92px;line-height:17.92px;color:#66696b;font-family:'Liberation Mono',monospace;">25</div>
<div class="t" style="left:3.49px;top:550.51px;font-size:17.92px;line-height:17.92px;color:#66696b;font-family:'Liberation Mono',monospace;">26</div>
<div class="t" style="left:3.49px;top:579.84px;font-size:17.92px;line-height:17.92px;color:#66696b;font-family:'Liberation Mono',monospace;">27</div>
<svg class="a" style="left:62px;top:197.98000000000002px;" width="14" height="15" viewBox="0 0 14 15"><path d="M1 1 H13 V8.5 L7 14 L1 8.5 Z" fill="#353638" stroke="#5e6163" stroke-width="1"/><path d="M4.5 6 H9.5" stroke="#6a6d6f" stroke-width="1"/></svg>
<svg class="a" style="left:62px;top:227.31px;" width="14" height="15" viewBox="0 0 14 15"><path d="M1 1 H13 V8.5 L7 14 L1 8.5 Z" fill="#353638" stroke="#5e6163" stroke-width="1"/><path d="M4.5 6 H9.5" stroke="#6a6d6f" stroke-width="1"/></svg>
<svg class="a" style="left:62px;top:285.96999999999997px;" width="14" height="15" viewBox="0 0 14 15"><path d="M1 1 H13 V8.5 L7 14 L1 8.5 Z" fill="#353638" stroke="#5e6163" stroke-width="1"/><path d="M4.5 6 H9.5" stroke="#6a6d6f" stroke-width="1"/></svg>
<svg class="a" style="left:62px;top:344.63px;" width="14" height="15" viewBox="0 0 14 15"><path d="M1 1 H13 V8.5 L7 14 L1 8.5 Z" fill="#353638" stroke="#5e6163" stroke-width="1"/><path d="M4.5 6 H9.5" stroke="#6a6d6f" stroke-width="1"/></svg>
<svg class="a" style="left:62px;top:461.95000000000005px;" width="14" height="15" viewBox="0 0 14 15"><path d="M1 14 H13 V6.5 L7 1 L1 6.5 Z" fill="#353638" stroke="#5e6163" stroke-width="1"/><path d="M4.5 9 H9.5" stroke="#6a6d6f" stroke-width="1"/></svg>
<svg class="a" style="left:62px;top:491.28px;" width="14" height="15" viewBox="0 0 14 15"><path d="M1 14 H13 V6.5 L7 1 L1 6.5 Z" fill="#353638" stroke="#5e6163" stroke-width="1"/><path d="M4.5 9 H9.5" stroke="#6a6d6f" stroke-width="1"/></svg>
<svg class="a" style="left:62px;top:520.6099999999999px;" width="14" height="15" viewBox="0 0 14 15"><path d="M1 14 H13 V6.5 L7 1 L1 6.5 Z" fill="#353638" stroke="#5e6163" stroke-width="1"/><path d="M4.5 9 H9.5" stroke="#6a6d6f" stroke-width="1"/></svg>
<svg class="a" style="left:62px;top:549.9399999999999px;" width="14" height="15" viewBox="0 0 14 15"><path d="M1 14 H13 V6.5 L7 1 L1 6.5 Z" fill="#353638" stroke="#5e6163" stroke-width="1"/><path d="M4.5 9 H9.5" stroke="#6a6d6f" stroke-width="1"/></svg>
<svg class="a" style="left:30px;top:197px;" width="19" height="17" viewBox="0 0 19 17"><circle cx="6" cy="7.5" r="5.6" fill="#3fa8c0"/><circle cx="6" cy="7.5" r="2.6" fill="none" stroke="#1e3a44" stroke-width="1.3"/><path d="M14.5 16.5 V3 M11.5 6 L14.5 2.5 L17.5 6" fill="none" stroke="#d0504a" stroke-width="1.5"/></svg>
<div class="a" style="left:30px;top:430px;width:19.5px;height:18.5px;background:#90caf9;"></div>
<div class="a" style="left:98px;top:17px;width:1px;height:85px;background:#3d3f41;"></div>
<div class="a" style="left:117px;top:249px;width:1px;height:264px;background:#3d3f41;"></div>
<div class="a" style="left:117px;top:293px;width:41px;height:1px;background:#3d3f41;"></div>
<div class="a" style="left:160px;top:308px;width:1px;height:174px;background:#3d3f41;"></div>
<div class="a" style="left:160px;top:351.5px;width:30px;height:1px;background:#3d3f41;"></div>
<div class="t" style="left:76.50px;top:-6.76px;font-size:17.92px;line-height:17.92px;color:#a9b7c6;font-family:'Liberation Mono',monospace;-webkit-text-stroke:0.25px currentColor;transform:scaleY(1.07);transform-origin:0 13.73px;"><span style="color:#a9b7c6;">  </span><span style="color:#c77a3e;">const</span><span style="color:#a9b7c6;"> GalleryPlaceholderView({</span></div>
<div class="t" style="left:76.50px;top:22.57px;font-size:17.92px;line-height:17.92px;color:#a9b7c6;font-family:'Liberation Mono',monospace;-webkit-text-stroke:0.25px currentColor;transform:scaleY(1.07);transform-origin:0 13.73px;"><span style="color:#a9b7c6;">      </span><span style="color:#c77a3e;">super</span><span style="color:#a9b7c6;">.key</span><span style="color:#c77a3e;">,</span></div>
<div class="t" style="left:76.50px;top:51.90px;font-size:17.92px;line-height:17.92px;color:#a9b7c6;font-family:'Liberation Mono',monospace;-webkit-text-stroke:0.25px currentColor;transform:scaleY(1.07);transform-origin:0 13.73px;"><span style="color:#a9b7c6;">      </span><span style="color:#c77a3e;">required</span><span style="color:#a9b7c6;"> </span><span style="color:#c77a3e;">this</span><span style="color:#a9b7c6;">.</span><span style="color:#9876aa;">model</span><span style="color:#c77a3e;">,</span></div>
<div class="t" style="left:76.50px;top:81.23px;font-size:17.92px;line-height:17.92px;color:#a9b7c6;font-family:'Liberation Mono',monospace;-webkit-text-stroke:0.25px currentColor;transform:scaleY(1.07);transform-origin:0 13.73px;"><span style="color:#a9b7c6;">      </span><span style="color:#c77a3e;">this</span><span style="color:#a9b7c6;">.</span><span style="color:#9876aa;">placeholder</span></div>
<div class="t" style="left:76.50px;top:110.56px;font-size:17.92px;line-height:17.92px;color:#a9b7c6;font-family:'Liberation Mono',monospace;-webkit-text-stroke:0.25px currentColor;transform:scaleY(1.07);transform-origin:0 13.73px;"><span style="color:#a9b7c6;">  })</span><span style="color:#c77a3e;">;</span></div>
<div class="t" style="left:76.50px;top:169.22px;font-size:17.92px;line-height:17.92px;color:#a9b7c6;font-family:'Liberation Mono',monospace;-webkit-text-stroke:0.25px currentColor;transform:scaleY(1.07);transform-origin:0 13.73px;"><span style="color:#a9b7c6;">  </span><span style="color:#bbb529;">@</span><span style="color:#a9b7c6;">override</span></div>
<div class="t" style="left:76.50px;top:198.55px;font-size:17.92px;line-height:17.92px;color:#a9b7c6;font-family:'Liberation Mono',monospace;-webkit-text-stroke:0.25px currentColor;transform:scaleY(1.07);transform-origin:0 13.73px;"><span style="color:#a9b7c6;">  Widget </span><span style="color:#f0c780;">build</span><span style="color:#a9b7c6;">(BuildContext context) {</span></div>
<div class="t" style="left:76.50px;top:227.88px;font-size:17.92px;line-height:17.92px;color:#a9b7c6;font-family:'Liberation Mono',monospace;-webkit-text-stroke:0.25px currentColor;transform:scaleY(1.07);transform-origin:0 13.73px;"><span style="color:#a9b7c6;">    </span><span style="color:#c77a3e;">return</span><span style="color:#a9b7c6;"> </span><span style="color:#f0c780;">Padding</span><span style="color:#a9b7c6;">(</span></div>
<div class="t" style="left:76.50px;top:257.21px;font-size:17.92px;line-height:17.92px;color:#a9b7c6;font-family:'Liberation Mono',monospace;-webkit-text-stroke:0.25px currentColor;transform:scaleY(1.07);transform-origin:0 13.73px;"><span style="color:#a9b7c6;">        padding: </span><span style="color:#c77a3e;">const</span><span style="color:#a9b7c6;"> EdgeInsets.all(8.0)</span></div>
<div class="t" style="left:76.50px;top:286.54px;font-size:17.92px;line-height:17.92px;color:#a9b7c6;font-family:'Liberation Mono',monospace;-webkit-text-stroke:0.25px currentColor;transform:scaleY(1.07);transform-origin:0 13.73px;"><span style="color:#a9b7c6;">        child:</span><span style="color:#f0c780;">CustomPaint</span><span style="color:#a9b7c6;">(</span></div>
<div class="t" style="left:76.50px;top:315.87px;font-size:17.92px;line-height:17.92px;color:#a9b7c6;font-family:'Liberation Mono',monospace;-webkit-text-stroke:0.25px currentColor;transform:scaleY(1.07);transform-origin:0 13.73px;"><span style="color:#a9b7c6;">           painter:Dashe</span><span style="color:#c77a3e;">,</span></div>
<div class="t" style="left:76.50px;top:345.20px;font-size:17.92px;line-height:17.92px;color:#a9b7c6;font-family:'Liberation Mono',monospace;-webkit-text-stroke:0.25px currentColor;transform:scaleY(1.07);transform-origin:0 13.73px;"><span style="color:#a9b7c6;">           child:</span><span style="color:#f0c780;">Container</span><span style="color:#a9b7c6;">(</span></div>
<div class="t" style="left:76.50px;top:374.53px;font-size:17.92px;line-height:17.92px;color:#a9b7c6;font-family:'Liberation Mono',monospace;-webkit-text-stroke:0.25px currentColor;transform:scaleY(1.07);transform-origin:0 13.73px;"><span style="color:#a9b7c6;">             width:</span><span style="color:#6897bb;">100</span><span style="color:#c77a3e;">,</span></div>
<div class="t" style="left:76.50px;top:403.86px;font-size:17.92px;line-height:17.92px;color:#a9b7c6;font-family:'Liberation Mono',monospace;-webkit-text-stroke:0.25px currentColor;transform:scaleY(1.07);transform-origin:0 13.73px;"><span style="color:#a9b7c6;">             height:</span><span style="color:#6897bb;">100</span><span style="color:#c77a3e;">,</span></div>
<div class="t" style="left:76.50px;top:433.19px;font-size:17.92px;line-height:17.92px;color:#a9b7c6;font-family:'Liberation Mono',monospace;-webkit-text-stroke:0.25px currentColor;transform:scaleY(1.07);transform-origin:0 13.73px;"><span style="color:#a9b7c6;">             color:Colors.</span><span style="color:#9876aa;font-style:italic;">blue</span><span style="color:#a9b7c6;">[</span><span style="color:#6897bb;">200</span><span style="color:#a9b7c6;">]</span><span style="color:#c77a3e;">,</span></div>
<div class="t" style="left:76.50px;top:462.52px;font-size:17.92px;line-height:17.92px;color:#a9b7c6;font-family:'Liberation Mono',monospace;-webkit-text-stroke:0.25px currentColor;transform:scaleY(1.07);transform-origin:0 13.73px;"><span style="color:#a9b7c6;">           )</span><span style="color:#c77a3e;">,</span><span style="color:#808080;">  // Container</span></div>
<div class="t" style="left:76.50px;top:491.85px;font-size:17.92px;line-height:17.92px;color:#a9b7c6;font-family:'Liberation Mono',monospace;-webkit-text-stroke:0.25px currentColor;transform:scaleY(1.07);transform-origin:0 13.73px;"><span style="color:#a9b7c6;">        )</span><span style="color:#c77a3e;">,</span><span style="color:#808080;">  // CustomPaint</span></div>
<div class="t" style="left:76.50px;top:521.18px;font-size:17.92px;line-height:17.92px;color:#a9b7c6;font-family:'Liberation Mono',monospace;-webkit-text-stroke:0.25px currentColor;transform:scaleY(1.07);transform-origin:0 13.73px;"><span style="color:#a9b7c6;">    )</span><span style="color:#c77a3e;">;</span><span style="color:#808080;">  // Padding</span></div>
<div class="t" style="left:76.50px;top:550.51px;font-size:17.92px;line-height:17.92px;color:#a9b7c6;font-family:'Liberation Mono',monospace;-webkit-text-stroke:0.25px currentColor;transform:scaleY(1.07);transform-origin:0 13.73px;"><span style="color:#a9b7c6;">  }</span></div>
<div class="t" style="left:76.50px;top:579.84px;font-size:17.92px;line-height:17.92px;color:#a9b7c6;font-family:'Liberation Mono',monospace;-webkit-text-stroke:0.25px currentColor;transform:scaleY(1.07);transform-origin:0 13.73px;"><span style="color:#a9b7c6;">}</span></div>
<div class="a" style="left:334.0px;top:312px;width:1.6px;height:25px;background:#d8d8d8;"></div>
<div class="a" style="left:618px;top:131px;width:7px;height:334px;background:#4b4d4f;border-radius:3px"></div>
<div class="a" style="left:78px;top:576px;width:346px;height:6px;background:#4b4d4f;border-radius:3px"></div>
<svg class="a" style="left:569px;top:7px;" width="9" height="9" viewBox="0 0 9 9"><circle cx="4.5" cy="4.5" r="4" fill="#6a2c38"/></svg>
<div class="t" style="left:581.00px;top:7.53px;font-size:10.00px;line-height:10.00px;color:#9a9c9e;font-family:'Liberation Sans',sans-serif;">1</div>
<svg class="a" style="left:595px;top:8px;" width="8" height="5" viewBox="0 0 8 5"><path d="M0.5 4.5 L4 1 L7.5 4.5" fill="none" stroke="#b8b8b8" stroke-width="1.2"/></svg>
<svg class="a" style="left:613px;top:9px;" width="8" height="5" viewBox="0 0 8 5"><path d="M0.5 0.5 L4 4 L7.5 0.5" fill="none" stroke="#b8b8b8" stroke-width="1.2"/></svg>
</div>
<div class="a" style="left:879px;top:46px;width:386px;height:22px;background:#3e3f41;"></div>
<div class="a" style="left:879px;top:68px;width:386px;height:25px;background:#3e3f41;"></div>
<div class="t" style="left:884.50px;top:53.53px;font-size:10.00px;line-height:10.00px;color:#a9abad;font-family:'Liberation Sans',sans-serif;letter-spacing:-0.093px;">Emulator:</div>
<svg class="a" style="left:944px;top:50px;" width="11" height="15" viewBox="0 0 11 15"><rect x="1" y="1" width="7" height="11" rx="1.3" fill="none" stroke="#afb1b3" stroke-width="1.2"/><circle cx="8.5" cy="12" r="2.3" fill="#59d65f"/></svg>
<div class="t" style="left:959.00px;top:53.53px;font-size:10.00px;line-height:10.00px;color:#c4c4c4;font-family:'Liberation Sans',sans-serif;letter-spacing:-0.217px;">Nexus 6 API 34</div>
<svg class="a" style="left:1030px;top:54px;" width="7" height="7" viewBox="0 0 7 7"><path d="M0.5 0.5 L6.5 6.5 M6.5 0.5 L0.5 6.5" stroke="#6f7274" stroke-width="1"/></svg>
<div class="a" style="left:932px;top:66.5px;width:114px;height:2px;background:#6c6f71;border-radius:1px"></div>
<svg class="a" style="left:1200px;top:52px;" width="12" height="11" viewBox="0 0 12 11"><rect x="0.75" y="0.75" width="10.5" height="9.5" fill="none" stroke="#afb1b3" stroke-width="1.3"/><path d="M0.75 3 H11.25" stroke="#afb1b3" stroke-width="1.6"/></svg>
<div class="a" style="left:1220px;top:51px;width:1px;height:13px;background:#515658;"></div>
<svg class="a" style="left:1228px;top:52px;" width="12" height="12" viewBox="0 0 12 12"><g transform="scale(1.0)"><circle cx="6" cy="6" r="3.6" fill="none" stroke="#afb1b3" stroke-width="2.2" stroke-dasharray="0"/><path d="M6 0.5 V2.5 M6 9.5 V11.5 M0.5 6 H2.5 M9.5 6 H11.5 M2.1 2.1 L3.5 3.5 M8.5 8.5 L9.9 9.9 M2.1 9.9 L3.5 8.5 M8.5 3.5 L9.9 2.1" stroke="#afb1b3" stroke-width="2"/><circle cx="6" cy="6" r="1.4" fill="#3c3f41"/></g></svg>
<div class="a" style="left:1250px;top:57px;width:11px;height:1.6px;background:#afb1b3;"></div>
<svg class="a" style="left:884px;top:75px;" width="13" height="13" viewBox="0 0 13 13"><path d="M3.8 3.2 A4.8 4.8 0 1 0 9.2 3.2" fill="none" stroke="#afb1b3" stroke-width="1.6"/><path d="M6.5 0.8 V6.5" stroke="#afb1b3" stroke-width="1.6"/></svg>
<svg class="a" style="left:902px;top:75px;" width="14" height="13" viewBox="0 0 14 13"><path d="M1 4.5 H4 L8 1.5 V11.5 L4 8.5 H1 Z" fill="#afb1b3"/><path d="M10 3.5 A4 4 0 0 1 10 9.5" fill="none" stroke="#afb1b3" stroke-width="1.4"/></svg>
<svg class="a" style="left:921px;top:75px;" width="12" height="13" viewBox="0 0 12 13"><path d="M1 4.5 H4 L8 1.5 V11.5 L4 8.5 H1 Z" fill="#afb1b3"/><path d="M9.5 5 A2 2 0 0 1 9.5 8" fill="none" stroke="#afb1b3" stroke-width="1.2"/></svg>
<svg class="a" style="left:941px;top:75px;" width="14" height="14" viewBox="0 0 14 14"><rect x="1" y="1.5" width="6" height="11" rx="1" fill="none" stroke="#afb1b3" stroke-width="1.3"/><path d="M9.5 2.5 A5 5 0 0 1 9.5 11.5" fill="none" stroke="#3592c4" stroke-width="1.6"/></svg>
<svg class="a" style="left:962px;top:75px;" width="14" height="14" viewBox="0 0 14 14"><rect x="7" y="1.5" width="6" height="11" rx="1" fill="none" stroke="#afb1b3" stroke-width="1.3"/><path d="M4.5 2.5 A5 5 0 0 0 4.5 11.5" fill="none" stroke="#3592c4" stroke-width="1.6"/></svg>
<svg class="a" style="left:987px;top:77px;" width="9" height="10" viewBox="0 0 9 10"><path d="M8.5 0.5 V9.5 L0.5 5 Z" fill="#afb1b3"/></svg>
<svg class="a" style="left:1008px;top:77px;" width="9" height="9" viewBox="0 0 9 9"><circle cx="4.5" cy="4.5" r="3.8" fill="#afb1b3"/></svg>
<div class="a" style="left:1031px;top:78px;width:8px;height:8px;background:#afb1b3;"></div>
<svg class="a" style="left:1050px;top:75px;" width="14" height="13" viewBox="0 0 14 13"><path d="M1 3.5 H4 L5.5 1.5 H8.5 L10 3.5 H13 V12 H1 Z" fill="#afb1b3"/><circle cx="7" cy="7.5" r="2.6" fill="#3c3f41"/><circle cx="7" cy="7.5" r="1.4" fill="#afb1b3"/></svg>
<svg class="a" style="left:1072px;top:76px;" width="14" height="11" viewBox="0 0 14 11"><rect x="0.5" y="1.5" width="9" height="8" rx="1" fill="#afb1b3"/><path d="M9.5 5.5 L13.5 2 V9 Z" fill="#afb1b3"/></svg>
<svg class="a" style="left:1093px;top:74px;" width="14" height="14" viewBox="0 0 14 14"><path d="M2.6 4 A5.2 5.2 0 1 1 2 8" fill="none" stroke="#afb1b3" stroke-width="1.5"/><path d="M0.5 1.5 V5.5 H4.5" fill="none" stroke="#afb1b3" stroke-width="1.4"/><path d="M7 4 V7.5 L9.2 8.8" fill="none" stroke="#afb1b3" stroke-width="1.2"/></svg>
<svg class="a" style="left:1119px;top:75px;" width="4" height="13" viewBox="0 0 4 13"><circle cx="2" cy="2" r="1.3" fill="#afb1b3"/><circle cx="2" cy="6.5" r="1.3" fill="#afb1b3"/><circle cx="2" cy="11" r="1.3" fill="#afb1b3"/></svg>
<div class="a" style="left:915px;top:93px;width:315px;height:541.5px;background:#fdfbfe;"></div>
<div class="a" style="left:915px;top:634.5px;width:315px;height:17.5px;background:#000000;"></div>
<div class="a" style="left:1030.5px;top:642.3px;width:83px;height:3.2px;background:#ffffff;border-radius:2px"></div>
<div class="t" style="left:921.00px;top:98.61px;font-size:10.50px;line-height:10.50px;color:#4a4a4a;font-family:'Liberation Sans',sans-serif;letter-spacing:0.161px;">6:07</div>
<svg class="a" style="left:954px;top:97px;" width="8" height="12" viewBox="0 0 8 12"><path d="M4 1 V6 M2 4 L4 1 L6 4" fill="none" stroke="#666" stroke-width="1"/><circle cx="4" cy="8.5" r="2.2" fill="none" stroke="#666" stroke-width="1.2"/></svg>
<svg class="a" style="left:968px;top:97px;" width="9" height="11" viewBox="0 0 9 11"><path d="M2.5 0.5 H8.5 V10.5 H0.5 V2.5 Z" fill="#555"/></svg>
<svg class="a" style="left:983px;top:97px;" width="11" height="11" viewBox="0 0 11 11"><circle cx="5.5" cy="5.5" r="4.5" fill="none" stroke="#555" stroke-width="1.4"/><path d="M1.5 4.5 H9.5" stroke="#555" stroke-width="1.6"/><path d="M1.5 2.8 A4.5 3 0 0 1 9.5 2.8 V4.5 H1.5 Z" fill="#555"/></svg>
<svg class="a" style="left:1174px;top:97px;" width="12" height="10" viewBox="0 0 12 10"><path d="M0.5 3 A8 8 0 0 1 11.5 3 L6 9.5 Z" fill="#555"/></svg>
<svg class="a" style="left:1189px;top:97px;" width="11" height="10" viewBox="0 0 11 10"><path d="M10.5 0.5 V9.5 H0.5 Z" fill="none" stroke="#555" stroke-width="1.1"/><path d="M10.5 3 V9.5 H4 Z" fill="#555"/></svg>
<svg class="a" style="left:1203px;top:96px;" width="7" height="12" viewBox="0 0 7 12"><rect x="2" y="0" width="3" height="2" fill="#555"/><rect x="0.5" y="1.5" width="6" height="10" rx="0.8" fill="#555"/></svg>
<svg class="a" style="left:1200px;top:126px;" width="16" height="14" viewBox="0 0 16 14"><path d="M1 7 H14.5 M8.5 1 L14.5 7 L8.5 13" fill="none" stroke="#1d1b20" stroke-width="1.6"/></svg>
<div class="a" style="left:1130.5px;top:240.8px;width:76.5px;height:76px;background:#90caf9;"></div>
<div class="a" style="left:0;top:0;width:1280px;height:652px;overflow:hidden">
<div class="a" style="left:1266px;top:51px;width:14px;height:60px;background:#2f3234;"></div>
<svg class="a" style="left:1268px;top:51px;" width="11" height="12" viewBox="0 0 11 12"><rect x="1" y="0.5" width="6.5" height="9.5" rx="1" fill="none" stroke="#c8c8c8" stroke-width="1.1"/><circle cx="9" cy="9.5" r="2" fill="#59d65f"/></svg>
<div class="t" style="left:1252.47px;top:78.75px;width:41.07px;height:11.50px;font-size:10px;line-height:11.50px;color:#d6d6d6;transform:rotate(90deg);transform-origin:50% 50%;letter-spacing:0.131px;">Emulator</div>
<svg class="a" style="left:1268px;top:120px;" width="11" height="11" viewBox="0 0 11 11"><rect x="1" y="0.5" width="6.5" height="9.5" rx="1" fill="none" stroke="#afb1b3" stroke-width="1.1"/><path d="M4 10 H10 V4" fill="none" stroke="#afb1b3" stroke-width="1.1"/></svg>
<div class="t" style="left:1240.64px;top:162.75px;width:64.71px;height:11.50px;font-size:10px;line-height:11.50px;color:#9fa1a3;transform:rotate(90deg);transform-origin:50% 50%;letter-spacing:-0.579px;">Device Manager</div>
<svg class="a" style="left:1268px;top:220px;" width="11" height="12" viewBox="0 0 11 12"><path d="M5.5 1 C2.5 1 2 4 2 6 V8.5 L0.5 10 H10.5 L9 8.5 V6 C9 4 8.5 1 5.5 1 Z" fill="#afb1b3"/></svg>
<div class="t" style="left:1249.65px;top:252.75px;width:46.70px;height:11.50px;font-size:10px;line-height:11.50px;color:#9fa1a3;transform:rotate(90deg);transform-origin:50% 50%;letter-spacing:-0.598px;">Notifications</div>
<svg class="a" style="left:1268px;top:302px;" width="11" height="11" viewBox="0 0 11 11"><path d="M6 0.5 L0.5 6 L2.2 7.7 L9.4 0.5 Z" fill="#3fb6e8"/><path d="M6 5.8 L3.2 8.6 L5.5 10.8 H9 L6.6 8.6 L9 5.8 Z" fill="#2c9fd4"/></svg>
<div class="t" style="left:1240.61px;top:341.75px;width:64.78px;height:11.50px;font-size:10px;line-height:11.50px;color:#9fa1a3;transform:rotate(90deg);transform-origin:50% 50%;letter-spacing:-0.440px;">Flutter Inspector</div>
<svg class="a" style="left:1268px;top:399px;" width="11" height="11" viewBox="0 0 11 11"><path d="M6 0.5 L0.5 6 L2.2 7.7 L9.4 0.5 Z" fill="#3fb6e8"/><path d="M6 5.8 L3.2 8.6 L5.5 10.8 H9 L6.6 8.6 L9 5.8 Z" fill="#2c9fd4"/></svg>
<div class="t" style="left:1234.14px;top:445.25px;width:77.72px;height:11.50px;font-size:10px;line-height:11.50px;color:#9fa1a3;transform:rotate(90deg);transform-origin:50% 50%;letter-spacing:-0.560px;">Flutter Performance</div>
<svg class="a" style="left:1268px;top:509px;" width="11" height="11" viewBox="0 0 11 11"><path d="M6 0.5 L0.5 6 L2.2 7.7 L9.4 0.5 Z" fill="#3fb6e8"/><path d="M6 5.8 L3.2 8.6 L5.5 10.8 H9 L6.6 8.6 L9 5.8 Z" fill="#2c9fd4"/></svg>
<div class="t" style="left:1244.60px;top:545.75px;width:56.80px;height:11.50px;font-size:10px;line-height:11.50px;color:#9fa1a3;transform:rotate(90deg);transform-origin:50% 50%;letter-spacing:-0.400px;">Flutter Outline</div>
<svg class="a" style="left:1268px;top:598px;" width="11" height="11" viewBox="0 0 11 11"><rect x="1" y="0.5" width="6.5" height="9.5" rx="1" fill="none" stroke="#afb1b3" stroke-width="1.1"/><path d="M4 10 H10 V4" fill="none" stroke="#afb1b3" stroke-width="1.1"/></svg>
<div class="t" style="left:1235.26px;top:640.25px;width:75.48px;height:11.50px;font-size:10px;line-height:11.50px;color:#9fa1a3;transform:rotate(90deg);transform-origin:50% 50%;letter-spacing:-0.700px;">Device File Explorer</div>
</div>
<div class="a" style="left:1228px;top:545px;width:23px;height:89px;background:#313335;border:1px solid #3a3c3e"></div>
<svg class="a" style="left:1234px;top:551px;" width="11" height="11" viewBox="0 0 11 11"><path d="M5.5 0.5 V10.5 M0.5 5.5 H10.5" stroke="#c8c8c8" stroke-width="1.5"/></svg>
<div class="a" style="left:1235px;top:577px;width:9px;height:1.3px;background:#6a6c6e;"></div>
<div class="t" style="left:1233.00px;top:596.38px;font-size:9.00px;line-height:9.00px;color:#c8c8c8;font-family:'Liberation Sans',sans-serif;font-weight:bold;letter-spacing:-0.403px;">1:1</div>
<svg class="a" style="left:1233px;top:615px;" width="13" height="12" viewBox="0 0 13 12"><rect x="0.75" y="0.75" width="11" height="10" fill="none" stroke="#6a6c6e" stroke-width="1.1"/><path d="M3 8.5 L9 3 M6 3 H9 V6" fill="none" stroke="#6a6c6e" stroke-width="1"/></svg>
<div class="t" style="left:177.00px;top:659.73px;font-size:10.00px;line-height:10.00px;color:#a9abad;font-family:'Liberation Sans',sans-serif;letter-spacing:-0.700px;">TODO</div>
<div class="t" style="left:232.00px;top:659.73px;font-size:10.00px;line-height:10.00px;color:#a9abad;font-family:'Liberation Sans',sans-serif;letter-spacing:-0.624px;">Profiler</div>
<div class="t" style="left:291.00px;top:659.73px;font-size:10.00px;line-height:10.00px;color:#a9abad;font-family:'Liberation Sans',sans-serif;letter-spacing:-0.698px;">Problems</div>
<div class="t" style="left:360.00px;top:659.73px;font-size:10.00px;line-height:10.00px;color:#a9abad;font-family:'Liberation Sans',sans-serif;letter-spacing:-0.505px;">Terminal</div>
<div class="t" style="left:424.00px;top:659.73px;font-size:10.00px;line-height:10.00px;color:#a9abad;font-family:'Liberation Sans',sans-serif;letter-spacing:-0.550px;">Logcat</div>
<div class="t" style="left:482.00px;top:659.73px;font-size:10.00px;line-height:10.00px;color:#a9abad;font-family:'Liberation Sans',sans-serif;letter-spacing:-0.561px;">App Quality Insights</div>
<div class="t" style="left:595.00px;top:659.73px;font-size:10.00px;line-height:10.00px;color:#a9abad;font-family:'Liberation Sans',sans-serif;letter-spacing:-0.700px;">Services</div>
<div class="t" style="left:658.00px;top:659.73px;font-size:10.00px;line-height:10.00px;color:#a9abad;font-family:'Liberation Sans',sans-serif;letter-spacing:-0.530px;">App Inspection</div>
<div class="t" style="left:750.00px;top:659.73px;font-size:10.00px;line-height:10.00px;color:#a9abad;font-family:'Liberation Sans',sans-serif;letter-spacing:-0.669px;">Dart Analysis</div>
<svg class="a" style="left:164px;top:658px;" width="10" height="10" viewBox="0 0 10 10"><path d="M0.5 1.5 H2 M0.5 5 H2 M0.5 8.5 H2 M3.5 1.5 H9.5 M3.5 5 H9.5 M3.5 8.5 H9.5" stroke="#afb1b3" stroke-width="1.6"/></svg>
<svg class="a" style="left:218px;top:658px;" width="11" height="10" viewBox="0 0 11 10"><path d="M1.5 9 A4.5 4.5 0 1 1 9.5 9" fill="none" stroke="#afb1b3" stroke-width="2"/><path d="M5.5 8 L7.5 4" stroke="#afb1b3" stroke-width="1.4"/></svg>
<svg class="a" style="left:278px;top:657px;" width="10" height="11" viewBox="0 0 10 11"><circle cx="5" cy="5.5" r="4.8" fill="#afb1b3"/><path d="M5 2.5 V6.5 M5 7.5 V9" stroke="#3c3f41" stroke-width="1.4"/></svg>
<svg class="a" style="left:346px;top:657px;" width="11" height="11" viewBox="0 0 11 11"><rect x="0.5" y="0.5" width="10" height="10" fill="#afb1b3"/><path d="M2 3 L4.5 5 L2 7 M5.5 8 H9" fill="none" stroke="#3c3f41" stroke-width="1.1"/></svg>
<svg class="a" style="left:411px;top:658px;" width="10" height="10" viewBox="0 0 10 10"><path d="M0.5 1.5 H9.5 M0.5 5 H5.5 M0.5 8.5 H8" stroke="#afb1b3" stroke-width="1.6"/></svg>
<svg class="a" style="left:468px;top:657px;" width="11" height="11" viewBox="0 0 11 11"><path d="M2.5 0.8 H8.5 L10.5 3.8 L5.5 10.5 L0.5 3.8 Z" fill="none" stroke="#afb1b3" stroke-width="1.1"/><path d="M0.5 3.8 H10.5 M4 0.8 L5.5 3.8 L7 0.8 M5.5 3.8 V10" stroke="#afb1b3" stroke-width="0.8"/></svg>
<svg class="a" style="left:580px;top:657px;" width="11" height="11" viewBox="0 0 11 11"><circle cx="5.5" cy="5.5" r="5" fill="#afb1b3"/><path d="M4 3 L8 5.5 L4 8 Z" fill="#3c3f41"/></svg>
<svg class="a" style="left:644px;top:656px;" width="10" height="13" viewBox="0 0 10 13"><circle cx="5" cy="4" r="3.5" fill="#afb1b3"/><rect x="2.5" y="7" width="5" height="4" fill="#afb1b3"/><rect x="1" y="11" width="8" height="1.5" fill="#afb1b3"/></svg>
<svg class="a" style="left:736px;top:657px;" width="11" height="11" viewBox="0 0 11 11"><path d="M1 5 L5 1 L10 4 L9 10 L3 10 Z" fill="#c07a7a"/><path d="M5 1 L9 10" stroke="#7a3a3a" stroke-width="0.8"/></svg>
<svg class="a" style="left:1177px;top:656px;" width="12" height="12" viewBox="0 0 12 12"><rect x="0.5" y="0.5" width="8" height="7" fill="none" stroke="#afb1b3" stroke-width="1"/><path d="M2 2 H7" stroke="#afb1b3"/><circle cx="8" cy="8" r="2.5" fill="#3c3f41" stroke="#afb1b3" stroke-width="1.1"/><path d="M10 10 L11.8 11.8" stroke="#afb1b3" stroke-width="1.3"/></svg>
<div class="t" style="left:1192.00px;top:659.73px;font-size:10.00px;line-height:10.00px;color:#a9abad;font-family:'Liberation Sans',sans-serif;letter-spacing:-0.641px;">Layout Inspector</div>
<div class="t" style="left:1096.00px;top:675.53px;font-size:10.00px;line-height:10.00px;color:#a9abad;font-family:'Liberation Sans',sans-serif;letter-spacing:-0.450px;">18:25</div>
<div class="t" style="left:1129.00px;top:675.53px;font-size:10.00px;line-height:10.00px;color:#a9abad;font-family:'Liberation Sans',sans-serif;letter-spacing:-0.700px;">CRLF</div>
<div class="t" style="left:1160.00px;top:675.53px;font-size:10.00px;line-height:10.00px;color:#a9abad;font-family:'Liberation Sans',sans-serif;letter-spacing:-0.518px;">UTF-8</div>
<div class="t" style="left:1196.00px;top:675.53px;font-size:10.00px;line-height:10.00px;color:#a9abad;font-family:'Liberation Sans',sans-serif;letter-spacing:-0.270px;">2 spaces</div>
<svg class="a" style="left:1243px;top:675px;" width="11" height="11" viewBox="0 0 11 11"><path d="M2 5 V3.5 A2.5 2.5 0 0 1 7 3.5" fill="none" stroke="#afb1b3" stroke-width="1.2"/><rect x="3" y="5" width="7.5" height="5.5" fill="#afb1b3"/></svg>
<svg class="a" style="left:1265px;top:675px;" width="11" height="11" viewBox="0 0 11 11"><path d="M0.5 1 H10.5 V8.5 H6 L4 10.5 V8.5 H0.5 Z" fill="#afb1b3"/><path d="M5.5 2.5 V5.5" stroke="#3c3f41" stroke-width="1.2"/></svg>
<div class="a" style="left:0px;top:689px;width:37px;height:31px;background:#1e3342;"></div>
<svg class="a" style="left:11px;top:697px;" width="15" height="15" viewBox="0 0 15 15"><path d="M0 2 L6.5 1 V7 H0 Z M7.5 0.9 L15 0 V7 H7.5 Z M0 8 H6.5 V14 L0 13 Z M7.5 8 H15 V15 L7.5 14.1 Z" fill="#ffffff"/></svg>
<div class="a" style="left:37px;top:689px;width:288px;height:31px;background:#f2f2f2;"></div>
<svg class="a" style="left:46px;top:697px;" width="14" height="15" viewBox="0 0 14 15"><circle cx="8.5" cy="5.5" r="4.5" fill="none" stroke="#222" stroke-width="1.3"/><path d="M5.3 8.8 L0.8 14" stroke="#222" stroke-width="1.5"/></svg>
<div class="t" style="left:71.00px;top:699.84px;font-size:12.00px;line-height:12.00px;color:#333333;font-family:'Liberation Sans',sans-serif;letter-spacing:0.159px;">Type here to search</div>
<svg class="a" style="left:338px;top:698px;" width="14" height="14" viewBox="0 0 14 14"><circle cx="7" cy="7" r="5.8" fill="none" stroke="#ffffff" stroke-width="1.8"/></svg>
<svg class="a" style="left:378px;top:697px;" width="16" height="15" viewBox="0 0 16 15"><rect x="1.5" y="3" width="9" height="9" fill="none" stroke="#e0e0e0" stroke-width="1.3"/><path d="M0 1 H12 M0 14 H12 M14 2 V5 M14 7 V9 M14 11 V13" stroke="#e0e0e0" stroke-width="1.3"/></svg>
<svg class="a" style="left:419px;top:695px;" width="19" height="17" viewBox="0 0 19 17"><path d="M0.5 2 H7 L9 4 H18.5 V16 H0.5 Z" fill="#f1c93c"/><rect x="0.5" y="6" width="18" height="10" fill="#ffd95a"/><rect x="5" y="11" width="9" height="4" fill="#3b8fd6"/></svg>
<svg class="a" style="left:460px;top:694px;" width="20" height="20" viewBox="0 0 20 20"><circle cx="10" cy="10.5" r="9" fill="#ff7139"/><circle cx="10" cy="11" r="5" fill="#7542e5"/><path d="M2 6 C4 1 12 -1 16 3 C13 2 9 3 8 6 Z" fill="#ffbd39"/></svg>
<svg class="a" style="left:501px;top:694px;" width="21" height="21" viewBox="0 0 21 21"><circle cx="10.5" cy="10.5" r="10" fill="#db4437"/><path d="M10.5 10.5 L1.8 15.5 A10 10 0 0 1 10.5 0.5 Z" fill="#0f9d58"/><path d="M10.5 10.5 L10.5 0.5 A10 10 0 0 1 19.2 15.5 Z" fill="#db4437"/><path d="M10.5 10.5 L19.2 15.5 A10 10 0 0 1 1.8 15.5 Z" fill="#f4c20d"/><circle cx="10.5" cy="10.5" r="4.6" fill="#ffffff"/><circle cx="10.5" cy="10.5" r="3.6" fill="#4285f4"/></svg>
<svg class="a" style="left:543px;top:694px;" width="20" height="20" viewBox="0 0 20 20"><rect x="0" y="0" width="20" height="20" rx="2" fill="#fb7a24"/><path d="M5 5 L15 15 M15 5 L5 15" stroke="#fff" stroke-width="3"/><rect x="7" y="7" width="6" height="6" fill="#fb7a24"/></svg>
<div class="a" style="left:575px;top:689px;width:40px;height:31px;background:#3b4a57;"></div>
<svg class="a" style="left:585px;top:695px;" width="20" height="20" viewBox="0 0 20 20"><circle cx="10" cy="10" r="9.5" fill="#ffffff"/><path d="M5 14 V6 L8 11 L11 6 V14 M12 6 H15 V14" fill="none" stroke="#2a6ad0" stroke-width="2"/></svg>
<svg class="a" style="left:626px;top:694px;" width="20" height="20" viewBox="0 0 20 20"><path d="M0 0 H20 V20 H0 Z" fill="#b345f1"/><path d="M0 0 H20 L12 20 H0 Z" fill="#7c4dff" opacity="0.6"/><rect x="3" y="3" width="14" height="14" fill="#000"/><text x="4.5" y="11" font-size="7" fill="#fff" font-family="Liberation Sans" font-weight="bold">PS</text><rect x="4.5" y="13.5" width="5" height="1.2" fill="#fff"/></svg>
<svg class="a" style="left:668px;top:695px;" width="19" height="17" viewBox="0 0 19 17"><rect x="0.5" y="0.5" width="18" height="16" fill="#0c0c0c" stroke="#c8c8c8" stroke-width="1"/><rect x="0.5" y="0.5" width="18" height="2.5" fill="#c8c8c8"/><path d="M3 6 H8" stroke="#aaa" stroke-width="1"/></svg>
<svg class="a" style="left:712px;top:696px;" width="14" height="16" viewBox="0 0 14 16"><ellipse cx="7" cy="8" rx="6.5" ry="2.5" fill="none" stroke="#c8c8c8" stroke-width="1"/><ellipse cx="7" cy="8" rx="6.5" ry="2.5" fill="none" stroke="#c8c8c8" stroke-width="1" transform="rotate(60 7 8)"/><ellipse cx="7" cy="8" rx="6.5" ry="2.5" fill="none" stroke="#c8c8c8" stroke-width="1" transform="rotate(-60 7 8)"/><circle cx="7" cy="8" r="1.2" fill="#c8c8c8"/></svg>
<svg class="a" style="left:751px;top:695px;" width="20" height="17" viewBox="0 0 20 17"><rect x="0.5" y="0.5" width="19" height="13" fill="#5ec2e6"/><rect x="3" y="3" width="14" height="8" fill="#d8f1fa"/><rect x="6" y="14" width="8" height="3" fill="#9adcf0"/></svg>
<svg class="a" style="left:1036px;top:701px;" width="14" height="8" viewBox="0 0 14 8"><path d="M1 7 L7 1 L13 7" fill="none" stroke="#ffffff" stroke-width="1.2"/></svg>
<svg class="a" style="left:1056px;top:699px;" width="14" height="12" viewBox="0 0 14 12"><rect x="0.5" y="0.5" width="13" height="10" fill="#7ec8e8"/><rect x="2.5" y="2.5" width="9" height="6" fill="#bfe6f6"/></svg>
<svg class="a" style="left:1078px;top:696px;" width="10" height="17" viewBox="0 0 10 17"><rect x="2" y="0.5" width="6" height="10" rx="3" fill="#dcdcdc"/><path d="M5 11 V15 M2 15.5 H8" stroke="#dcdcdc" stroke-width="1.2"/></svg>
<svg class="a" style="left:1096px;top:699px;" width="15" height="11" viewBox="0 0 15 11"><rect x="1" y="2" width="13" height="8" fill="#dcdcdc"/><rect x="3" y="0" width="3" height="2" fill="#dcdcdc"/><rect x="9" y="0" width="3" height="2" fill="#dcdcdc"/></svg>
<svg class="a" style="left:1115px;top:698px;" width="16" height="13" viewBox="0 0 16 13"><path d="M0.5 4 H3.5 L7 0.8 V12.2 L3.5 9 H0.5 Z" fill="none" stroke="#e0e0e0" stroke-width="1.1"/><path d="M9.5 4 A3 3 0 0 1 9.5 9 M12 2 A6 6 0 0 1 12 11" fill="none" stroke="#e0e0e0" stroke-width="1.1"/></svg>
<svg class="a" style="left:1138px;top:698px;" width="13" height="13" viewBox="0 0 13 13"><path d="M1 12 A11 11 0 0 1 12 1 M4 12 A8 8 0 0 1 12 4 M7 12 A5 5 0 0 1 12 7" fill="none" stroke="#e0e0e0" stroke-width="1.2"/><circle cx="11" cy="11" r="1.3" fill="#e0e0e0"/></svg>
<div class="t" style="left:1159.00px;top:701.11px;font-size:10.50px;line-height:10.50px;color:#ffffff;font-family:'Liberation Sans',sans-serif;letter-spacing:-0.700px;">ENG</div>
<div class="t" style="left:1194.00px;top:693.11px;font-size:10.50px;line-height:10.50px;color:#ffffff;font-family:'Liberation Sans',sans-serif;letter-spacing:-0.631px;">6:07 PM</div>
<div class="t" style="left:1191.00px;top:707.41px;font-size:10.50px;line-height:10.50px;color:#ffffff;font-family:'Liberation Sans',sans-serif;letter-spacing:0.017px;">5/5/2024</div>
<svg class="a" style="left:1249px;top:698px;" width="15" height="15" viewBox="0 0 15 15"><path d="M0.5 0.5 H14.5 V11.5 H10 L7.5 14.5 L5 11.5 H0.5 Z" fill="#ffffff"/><path d="M3 3.5 H12 M3 6 H12 M3 8.5 H9" stroke="#1c2a36" stroke-width="1"/></svg>
<div class="a" style="left:509px;top:277.5px;width:420px;height:100px;background:#46484a;border:1px solid #515355"></div>
<div class="a" style="left:510px;top:278.5px;width:418px;height:26px;background:#505254;"></div>
<svg class="a" style="left:515px;top:285px;" width="12" height="12" viewBox="0 0 12 12"><circle cx="6" cy="6" r="5.8" fill="#3fa8c0"/><path d="M7.8 4.3 A2.3 2.3 0 1 0 7.8 7.7" fill="none" stroke="#234" stroke-width="1.1"/></svg>
<svg class="a" style="left:515px;top:311px;" width="12" height="12" viewBox="0 0 12 12"><circle cx="6" cy="6" r="5.8" fill="#c9a05a"/><path d="M3.5 4.8 H8.5 M3.5 7.2 H8.5" stroke="#4a3a20" stroke-width="1.1"/></svg>
<svg class="a" style="left:515px;top:337px;" width="12" height="12" viewBox="0 0 12 12"><circle cx="6" cy="6" r="5.8" fill="#3fa8c0"/><path d="M7.8 4.3 A2.3 2.3 0 1 0 7.8 7.7" fill="none" stroke="#234" stroke-width="1.1"/></svg>
<div class="t" style="left:532.50px;top:283.94px;font-size:17.70px;line-height:17.70px;color:#bbbbbb;font-family:'Liberation Mono',monospace;-webkit-text-stroke:0.2px currentColor;"><span style="color:#6ca6e6">Dashe</span><span style="color:#bbbbbb">dBorderPainter</span></div>
<div class="t" style="left:759.50px;top:283.94px;font-size:17.70px;line-height:17.70px;color:#bbbbbb;font-family:'Liberation Mono',monospace;-webkit-text-stroke:0.2px currentColor;"><span style="color:#7f8183">(package:divar…</span></div>
<div class="t" style="left:532.50px;top:309.94px;font-size:17.70px;line-height:17.70px;color:#bbbbbb;font-family:'Liberation Mono',monospace;-webkit-text-stroke:0.2px currentColor;"><span style="color:#6ca6e6">Dashe</span><span style="color:#bbbbbb">dBorderPainter</span></div>
<div class="t" style="left:758.50px;top:309.94px;font-size:17.70px;line-height:17.70px;color:#bbbbbb;font-family:'Liberation Mono',monospace;-webkit-text-stroke:0.2px currentColor;"><span style="color:#7f8183">DashedBorderPa…</span></div>
<div class="t" style="left:532.50px;top:335.94px;font-size:17.70px;line-height:17.70px;color:#bbbbbb;font-family:'Liberation Mono',monospace;-webkit-text-stroke:0.2px currentColor;"><span style="color:#bbbbbb">Smart</span><span style="color:#6ca6e6">Dashe</span><span style="color:#bbbbbb">sType</span></div>
<div class="t" style="left:716.50px;top:335.94px;font-size:17.70px;line-height:17.70px;color:#bbbbbb;font-family:'Liberation Mono',monospace;-webkit-text-stroke:0.2px currentColor;"><span style="color:#7f8183">(package:flutter/m…</span></div>
<div class="t" style="left:519.00px;top:363.65px;font-size:7.50px;line-height:7.50px;color:#7d7f81;font-family:'Liberation Sans',sans-serif;letter-spacing:0.280px;">Ctrl+Down and Ctrl+Up will move caret down and up in the editor</div>
<div class="t" style="left:756.00px;top:363.65px;font-size:7.50px;line-height:7.50px;color:#5c95d6;font-family:'Liberation Sans',sans-serif;letter-spacing:0.199px;">Next Tip</div>
<svg class="a" style="left:918px;top:361px;" width="4" height="12" viewBox="0 0 4 12"><circle cx="2" cy="2" r="1.1" fill="#afb1b3"/><circle cx="2" cy="6" r="1.1" fill="#afb1b3"/><circle cx="2" cy="10" r="1.1" fill="#afb1b3"/></svg>
<svg class="a" style="left:0;top:0" width="1280" height="720" viewBox="0 0 1280 720"><g transform="translate(1100,115) scale(0.09766)"><path d="M745,140 C752,190 748,226 715,228 H505 C475,228 462,205 470,168" fill="none" stroke="#1d1b20" stroke-width="20.48" stroke-linecap="round" stroke-linejoin="round"/><path d="M612,182 V226" fill="none" stroke="#1d1b20" stroke-width="20.48" stroke-linecap="round" stroke-linejoin="round"/><path d="M400,132 V226" fill="none" stroke="#1d1b20" stroke-width="20.48" stroke-linecap="round" stroke-linejoin="round"/><path d="M368,112 C382,98 398,118 422,102" fill="none" stroke="#1d1b20" stroke-width="20.48" stroke-linecap="round" stroke-linejoin="round"/><path d="M348,112 L268,178 C252,195 268,224 302,226 H250" fill="none" stroke="#1d1b20" stroke-width="20.48" stroke-linecap="round" stroke-linejoin="round"/><path d="M360,86 L300,124" fill="none" stroke="#1d1b20" stroke-width="20.48" stroke-linecap="round" stroke-linejoin="round"/><path d="M250,226 C205,228 198,178 226,172 C258,166 258,216 232,226" fill="none" stroke="#1d1b20" stroke-width="20.48" stroke-linecap="round" stroke-linejoin="round"/><path d="M214,226 C150,226 104,214 98,236 C96,264 162,272 218,252" fill="none" stroke="#1d1b20" stroke-width="20.48" stroke-linecap="round" stroke-linejoin="round"/><circle cx="700" cy="140" r="12.29" fill="#1d1b20"/><circle cx="736" cy="140" r="12.29" fill="#1d1b20"/><circle cx="718" cy="112" r="12.29" fill="#1d1b20"/><circle cx="540" cy="146" r="12.29" fill="#1d1b20"/><circle cx="576" cy="146" r="12.29" fill="#1d1b20"/></g></svg>
<svg class="a" style="left:0;top:0" width="1280" height="720" viewBox="0 0 1280 720"><g transform="translate(1155,166) scale(0.05076)"><path d="M1130,160 C1170,185 1200,215 1195,245 C1190,268 1150,268 1095,262" fill="none" stroke="#1d1b20" stroke-width="29.55" stroke-linecap="round" stroke-linejoin="round"/><path d="M1065,185 V262 H665" fill="none" stroke="#1d1b20" stroke-width="29.55" stroke-linecap="round" stroke-linejoin="round"/><path d="M985,200 V262" fill="none" stroke="#1d1b20" stroke-width="29.55" stroke-linecap="round" stroke-linejoin="round"/><path d="M905,200 V262" fill="none" stroke="#1d1b20" stroke-width="29.55" stroke-linecap="round" stroke-linejoin="round"/><path d="M840,190 V262" fill="none" stroke="#1d1b20" stroke-width="29.55" stroke-linecap="round" stroke-linejoin="round"/><path d="M700,262 C650,262 648,182 700,182 C742,182 760,232 735,262" fill="none" stroke="#1d1b20" stroke-width="29.55" stroke-linecap="round" stroke-linejoin="round"/><path d="M560,185 V262 H300" fill="none" stroke="#1d1b20" stroke-width="29.55" stroke-linecap="round" stroke-linejoin="round"/><path d="M450,195 V262" fill="none" stroke="#1d1b20" stroke-width="29.55" stroke-linecap="round" stroke-linejoin="round"/><path d="M380,160 C420,185 440,215 435,245 C430,265 400,265 350,262" fill="none" stroke="#1d1b20" stroke-width="29.55" stroke-linecap="round" stroke-linejoin="round"/><path d="M300,195 C250,190 238,225 272,250 C230,262 150,232 110,228 C55,225 50,285 130,300 C200,312 280,300 320,282" fill="none" stroke="#1d1b20" stroke-width="29.55" stroke-linecap="round" stroke-linejoin="round"/><circle cx="820" cy="130" r="21.67" fill="#1d1b20"/><circle cx="862" cy="130" r="21.67" fill="#1d1b20"/><circle cx="520" cy="305" r="21.67" fill="#1d1b20"/><circle cx="450" cy="135" r="21.67" fill="#1d1b20"/></g></svg>
<svg class="a" style="left:0;top:0" width="1280" height="720" viewBox="0 0 1280 720"><g transform="translate(925,160) scale(0.06640)"><path d="M1150,215 V295 H960" fill="none" stroke="#4e4b52" stroke-width="22.59" stroke-linecap="round" stroke-linejoin="round"/><path d="M1090,225 V295" fill="none" stroke="#4e4b52" stroke-width="22.59" stroke-linecap="round" stroke-linejoin="round"/><path d="M1030,225 V295" fill="none" stroke="#4e4b52" stroke-width="22.59" stroke-linecap="round" stroke-linejoin="round"/><path d="M960,295 C915,295 905,240 935,232 C965,225 975,275 955,305 C935,335 890,340 860,335" fill="none" stroke="#4e4b52" stroke-width="22.59" stroke-linecap="round" stroke-linejoin="round"/><path d="M830,195 V295" fill="none" stroke="#4e4b52" stroke-width="22.59" stroke-linecap="round" stroke-linejoin="round"/><path d="M775,235 C785,290 760,325 715,335" fill="none" stroke="#4e4b52" stroke-width="22.59" stroke-linecap="round" stroke-linejoin="round"/><path d="M700,262 C650,255 600,270 610,300 C625,330 690,330 715,305" fill="none" stroke="#4e4b52" stroke-width="22.59" stroke-linecap="round" stroke-linejoin="round"/><path d="M640,295 C600,295 595,245 620,240 C650,235 655,280 640,310 C625,335 590,340 570,335" fill="none" stroke="#4e4b52" stroke-width="22.59" stroke-linecap="round" stroke-linejoin="round"/><path d="M505,295 C465,295 458,245 482,240 C510,235 518,280 500,310 C485,335 450,340 430,335" fill="none" stroke="#4e4b52" stroke-width="22.59" stroke-linecap="round" stroke-linejoin="round"/><path d="M405,195 V295" fill="none" stroke="#4e4b52" stroke-width="22.59" stroke-linecap="round" stroke-linejoin="round"/><path d="M360,225 V295 H190 C160,295 145,270 150,235" fill="none" stroke="#4e4b52" stroke-width="22.59" stroke-linecap="round" stroke-linejoin="round"/><circle cx="360" cy="190" r="16.57" fill="#4e4b52"/><circle cx="230" cy="200" r="16.57" fill="#4e4b52"/><circle cx="265" cy="200" r="16.57" fill="#4e4b52"/></g></svg>
<svg class="a" style="left:0;top:0" width="1280" height="720" viewBox="0 0 1280 720"><g transform="translate(1150,160) scale(0.10417)"><path d="M652,540 C612,515 585,555 615,572 L652,592 H560" fill="none" stroke="#1d1b20" stroke-width="24.00" stroke-linecap="round" stroke-linejoin="round"/><path d="M612,500 L528,560 C510,578 522,592 552,592" fill="none" stroke="#1d1b20" stroke-width="24.00" stroke-linecap="round" stroke-linejoin="round"/><path d="M552,592 H395" fill="none" stroke="#1d1b20" stroke-width="24.00" stroke-linecap="round" stroke-linejoin="round"/><path d="M485,552 V592" fill="none" stroke="#1d1b20" stroke-width="24.00" stroke-linecap="round" stroke-linejoin="round"/><path d="M440,556 V592" fill="none" stroke="#1d1b20" stroke-width="24.00" stroke-linecap="round" stroke-linejoin="round"/><path d="M400,556 V592 C400,625 345,628 335,600" fill="none" stroke="#1d1b20" stroke-width="24.00" stroke-linecap="round" stroke-linejoin="round"/><path d="M330,518 V592" fill="none" stroke="#1d1b20" stroke-width="24.00" stroke-linecap="round" stroke-linejoin="round"/><path d="M298,505 C318,490 330,515 352,500" fill="none" stroke="#1d1b20" stroke-width="24.00" stroke-linecap="round" stroke-linejoin="round"/><path d="M292,512 L222,562 C207,578 222,592 252,592 H200" fill="none" stroke="#1d1b20" stroke-width="24.00" stroke-linecap="round" stroke-linejoin="round"/><path d="M302,490 L246,526" fill="none" stroke="#1d1b20" stroke-width="24.00" stroke-linecap="round" stroke-linejoin="round"/><path d="M200,592 C165,594 160,550 186,546 C214,542 214,584 194,592" fill="none" stroke="#1d1b20" stroke-width="24.00" stroke-linecap="round" stroke-linejoin="round"/><path d="M178,592 C120,592 72,580 66,602 C62,628 124,636 182,614" fill="none" stroke="#1d1b20" stroke-width="24.00" stroke-linecap="round" stroke-linejoin="round"/></g></svg>
<div class="a" style="left:0px;top:521px;width:156px;height:168px;background:#ffffff;"></div>
<svg class="a" style="left:0;top:0" width="1280" height="720" viewBox="0 0 1280 720"><path d="M19.50,561.01 L21.57,558.06 L23.79,555.23 L26.14,552.52 L28.62,549.94 L31.23,547.49 L33.96,545.18 L36.79,543.01 L39.73,541.00 L42.76,539.13 L45.88,537.43 L49.08,535.90 L52.34,534.52 L55.67,533.32 L59.05,532.30 L62.47,531.44 L65.92,530.76 L69.40,530.26 L72.90,529.94 L76.40,529.80 L79.90,529.83 L83.39,530.05 L86.85,530.44 L90.29,531.00 L93.69,531.74 L93.38,533.21 L90.02,532.69 L86.65,532.34 L83.27,532.17 L79.89,532.17 L76.51,532.34 L73.16,532.68 L69.84,533.19 L66.55,533.87 L63.30,534.71 L60.11,535.72 L56.97,536.88 L53.91,538.21 L50.92,539.68 L48.01,541.30 L45.20,543.07 L42.48,544.97 L39.87,547.01 L37.37,549.17 L34.98,551.45 L32.72,553.85 L30.59,556.36 L28.59,558.96 L26.73,561.66 L25.01,564.45 Z" fill="#f2ea3a" stroke="#333" stroke-width="0.5"/><path d="M70.02,531.06 L71.69,530.86 L73.37,530.70 L75.05,530.58 L76.73,530.51 L78.41,530.47 L80.09,530.48 L81.77,530.53 L83.45,530.62 L85.13,530.75 L86.80,530.92 L88.47,531.13 L90.13,531.39 L91.78,531.68 L93.43,532.02 L95.07,532.40 L96.69,532.81 L98.31,533.27 L99.91,533.77 L101.50,534.30 L103.08,534.88 L104.64,535.49 L106.18,536.14 L107.71,536.83 L109.22,537.56 L108.96,538.10 L107.45,537.40 L105.93,536.74 L104.39,536.12 L102.83,535.53 L101.27,534.99 L99.68,534.48 L98.09,534.01 L96.49,533.59 L94.88,533.20 L93.25,532.85 L91.63,532.54 L89.99,532.28 L88.35,532.05 L86.70,531.86 L85.05,531.72 L83.40,531.61 L81.74,531.55 L80.08,531.53 L78.43,531.55 L76.77,531.61 L75.12,531.71 L73.47,531.85 L71.83,532.03 L70.19,532.25 Z" fill="#444"/><path d="M118.17,538.95 L121.42,541.33 L124.52,543.89 L127.46,546.62 L130.24,549.50 L132.85,552.53 L135.28,555.70 L137.52,558.99 L139.57,562.40 L141.42,565.92 L143.06,569.53 L144.50,573.22 L145.72,576.98 L146.72,580.80 L147.50,584.66 L148.06,588.56 L148.40,592.47 L148.52,596.39 L148.41,600.30 L148.09,604.20 L147.54,608.06 L146.78,611.88 L145.80,615.65 L144.61,619.34 L143.22,622.96 L141.82,622.42 L142.96,618.81 L143.90,615.16 L144.63,611.46 L145.15,607.73 L145.45,603.98 L145.54,600.23 L145.42,596.49 L145.08,592.76 L144.54,589.07 L143.79,585.42 L142.83,581.83 L141.68,578.30 L140.32,574.85 L138.78,571.48 L137.05,568.22 L135.14,565.07 L133.06,562.03 L130.82,559.12 L128.42,556.35 L125.87,553.72 L123.18,551.25 L120.35,548.94 L117.41,546.80 L114.36,544.83 Z" fill="#2fa84a" stroke="#333" stroke-width="0.5"/><path d="M40.83,658.05 L37.71,655.75 L34.73,653.29 L31.89,650.68 L29.20,647.93 L26.67,645.03 L24.31,642.01 L22.12,638.86 L20.11,635.61 L18.28,632.26 L16.64,628.82 L15.19,625.30 L13.94,621.72 L12.89,618.07 L12.04,614.39 L11.39,610.66 L10.95,606.92 L10.71,603.16 L10.68,599.40 L10.85,595.65 L11.23,591.93 L11.81,588.23 L12.59,584.58 L13.57,580.99 L14.73,577.46 L15.87,577.83 L14.96,581.36 L14.24,584.93 L13.71,588.52 L13.39,592.13 L13.26,595.75 L13.33,599.37 L13.60,602.96 L14.06,606.54 L14.71,610.07 L15.56,613.56 L16.59,616.99 L17.80,620.35 L19.20,623.63 L20.77,626.83 L22.50,629.93 L24.41,632.93 L26.46,635.81 L28.67,638.57 L31.02,641.20 L33.51,643.70 L36.12,646.05 L38.85,648.25 L41.70,650.29 L44.64,652.17 Z" fill="#d4202e" stroke="#333" stroke-width="0.5"/><path d="M137.66,639.22 L135.13,642.42 L132.43,645.46 L129.56,648.34 L126.53,651.04 L123.36,653.56 L120.06,655.89 L116.63,658.02 L113.10,659.95 L109.46,661.67 L105.74,663.17 L101.94,664.46 L98.09,665.52 L94.18,666.36 L90.24,666.97 L86.28,667.35 L82.31,667.51 L78.35,667.44 L74.40,667.14 L70.48,666.61 L66.61,665.86 L62.79,664.89 L59.04,663.71 L55.38,662.31 L51.80,660.71 L52.29,659.62 L55.89,660.96 L59.55,662.10 L63.26,663.03 L67.02,663.73 L70.80,664.22 L74.60,664.49 L78.40,664.54 L82.18,664.38 L85.95,664.00 L89.68,663.40 L93.37,662.59 L96.99,661.57 L100.54,660.35 L104.02,658.92 L107.39,657.31 L110.67,655.50 L113.82,653.52 L116.86,651.36 L119.75,649.03 L122.51,646.55 L125.11,643.91 L127.55,641.14 L129.83,638.23 L131.93,635.21 Z" fill="#4b4aa8" stroke="#333" stroke-width="0.5"/></svg>
<svg class="a" style="left:0;top:0" width="1280" height="720" viewBox="0 0 1280 720"><path d="M118.02,564.90 L115.62,578.44" transform="translate(-0.80,1.39)" fill="none" stroke="#0a0a0a" stroke-width="1.6" stroke-linecap="round" stroke-linejoin="round"/><path d="M118.02,564.90 L115.62,578.44" transform="translate(-0.53,0.92)" fill="none" stroke="#0a0a0a" stroke-width="1.6" stroke-linecap="round" stroke-linejoin="round"/><path d="M118.02,564.90 L115.62,578.44" transform="translate(-0.27,0.46)" fill="none" stroke="#0a0a0a" stroke-width="1.6" stroke-linecap="round" stroke-linejoin="round"/><path d="M118.02,564.90 L115.62,578.44" transform="translate(0.00,-0.00)" fill="none" stroke="#0a0a0a" stroke-width="1.6" stroke-linecap="round" stroke-linejoin="round"/><path d="M118.02,564.90 L115.62,578.44" transform="translate(0.27,-0.46)" fill="none" stroke="#0a0a0a" stroke-width="1.6" stroke-linecap="round" stroke-linejoin="round"/><path d="M118.02,564.90 L115.62,578.44" transform="translate(0.53,-0.92)" fill="none" stroke="#0a0a0a" stroke-width="1.6" stroke-linecap="round" stroke-linejoin="round"/><path d="M118.02,564.90 L115.62,578.44" transform="translate(0.80,-1.39)" fill="none" stroke="#0a0a0a" stroke-width="1.6" stroke-linecap="round" stroke-linejoin="round"/><path d="M113.33,575.31 C112.81,579.48 105.00,580.00 99.27,579.17" transform="translate(-0.80,1.39)" fill="none" stroke="#0a0a0a" stroke-width="1.6" stroke-linecap="round" stroke-linejoin="round"/><path d="M113.33,575.31 C112.81,579.48 105.00,580.00 99.27,579.17" transform="translate(-0.53,0.92)" fill="none" stroke="#0a0a0a" stroke-width="1.6" stroke-linecap="round" stroke-linejoin="round"/><path d="M113.33,575.31 C112.81,579.48 105.00,580.00 99.27,579.17" transform="translate(-0.27,0.46)" fill="none" stroke="#0a0a0a" stroke-width="1.6" stroke-linecap="round" stroke-linejoin="round"/><path d="M113.33,575.31 C112.81,579.48 105.00,580.00 99.27,579.17" transform="translate(0.00,-0.00)" fill="none" stroke="#0a0a0a" stroke-width="1.6" stroke-linecap="round" stroke-linejoin="round"/><path d="M113.33,575.31 C112.81,579.48 105.00,580.00 99.27,579.17" transform="translate(0.27,-0.46)" fill="none" stroke="#0a0a0a" stroke-width="1.6" stroke-linecap="round" stroke-linejoin="round"/><path d="M113.33,575.31 C112.81,579.48 105.00,580.00 99.27,579.17" transform="translate(0.53,-0.92)" fill="none" stroke="#0a0a0a" stroke-width="1.6" stroke-linecap="round" stroke-linejoin="round"/><path d="M113.33,575.31 C112.81,579.48 105.00,580.00 99.27,579.17" transform="translate(0.80,-1.39)" fill="none" stroke="#0a0a0a" stroke-width="1.6" stroke-linecap="round" stroke-linejoin="round"/><path d="M103.44,570.62 C97.71,572.19 95.62,578.44 100.31,579.48 C104.48,579.79 106.56,575.31 103.44,570.62" transform="translate(-0.80,1.39)" fill="none" stroke="#0a0a0a" stroke-width="1.6" stroke-linecap="round" stroke-linejoin="round"/><path d="M103.44,570.62 C97.71,572.19 95.62,578.44 100.31,579.48 C104.48,579.79 106.56,575.31 103.44,570.62" transform="translate(-0.53,0.92)" fill="none" stroke="#0a0a0a" stroke-width="1.6" stroke-linecap="round" stroke-linejoin="round"/><path d="M103.44,570.62 C97.71,572.19 95.62,578.44 100.31,579.48 C104.48,579.79 106.56,575.31 103.44,570.62" transform="translate(-0.27,0.46)" fill="none" stroke="#0a0a0a" stroke-width="1.6" stroke-linecap="round" stroke-linejoin="round"/><path d="M103.44,570.62 C97.71,572.19 95.62,578.44 100.31,579.48 C104.48,579.79 106.56,575.31 103.44,570.62" transform="translate(0.00,-0.00)" fill="none" stroke="#0a0a0a" stroke-width="1.6" stroke-linecap="round" stroke-linejoin="round"/><path d="M103.44,570.62 C97.71,572.19 95.62,578.44 100.31,579.48 C104.48,579.79 106.56,575.31 103.44,570.62" transform="translate(0.27,-0.46)" fill="none" stroke="#0a0a0a" stroke-width="1.6" stroke-linecap="round" stroke-linejoin="round"/><path d="M103.44,570.62 C97.71,572.19 95.62,578.44 100.31,579.48 C104.48,579.79 106.56,575.31 103.44,570.62" transform="translate(0.53,-0.92)" fill="none" stroke="#0a0a0a" stroke-width="1.6" stroke-linecap="round" stroke-linejoin="round"/><path d="M103.44,570.62 C97.71,572.19 95.62,578.44 100.31,579.48 C104.48,579.79 106.56,575.31 103.44,570.62" transform="translate(0.80,-1.39)" fill="none" stroke="#0a0a0a" stroke-width="1.6" stroke-linecap="round" stroke-linejoin="round"/><path d="M96.15,567.50 C95.62,573.23 93.54,577.40 88.33,578.44" transform="translate(-0.80,1.39)" fill="none" stroke="#0a0a0a" stroke-width="1.6" stroke-linecap="round" stroke-linejoin="round"/><path d="M96.15,567.50 C95.62,573.23 93.54,577.40 88.33,578.44" transform="translate(-0.53,0.92)" fill="none" stroke="#0a0a0a" stroke-width="1.6" stroke-linecap="round" stroke-linejoin="round"/><path d="M96.15,567.50 C95.62,573.23 93.54,577.40 88.33,578.44" transform="translate(-0.27,0.46)" fill="none" stroke="#0a0a0a" stroke-width="1.6" stroke-linecap="round" stroke-linejoin="round"/><path d="M96.15,567.50 C95.62,573.23 93.54,577.40 88.33,578.44" transform="translate(0.00,-0.00)" fill="none" stroke="#0a0a0a" stroke-width="1.6" stroke-linecap="round" stroke-linejoin="round"/><path d="M96.15,567.50 C95.62,573.23 93.54,577.40 88.33,578.44" transform="translate(0.27,-0.46)" fill="none" stroke="#0a0a0a" stroke-width="1.6" stroke-linecap="round" stroke-linejoin="round"/><path d="M96.15,567.50 C95.62,573.23 93.54,577.40 88.33,578.44" transform="translate(0.53,-0.92)" fill="none" stroke="#0a0a0a" stroke-width="1.6" stroke-linecap="round" stroke-linejoin="round"/><path d="M96.15,567.50 C95.62,573.23 93.54,577.40 88.33,578.44" transform="translate(0.80,-1.39)" fill="none" stroke="#0a0a0a" stroke-width="1.6" stroke-linecap="round" stroke-linejoin="round"/><path d="M88.85,574.27 C88.85,581.04 86.77,585.21 81.56,586.25" transform="translate(-0.80,1.39)" fill="none" stroke="#0a0a0a" stroke-width="1.6" stroke-linecap="round" stroke-linejoin="round"/><path d="M88.85,574.27 C88.85,581.04 86.77,585.21 81.56,586.25" transform="translate(-0.53,0.92)" fill="none" stroke="#0a0a0a" stroke-width="1.6" stroke-linecap="round" stroke-linejoin="round"/><path d="M88.85,574.27 C88.85,581.04 86.77,585.21 81.56,586.25" transform="translate(-0.27,0.46)" fill="none" stroke="#0a0a0a" stroke-width="1.6" stroke-linecap="round" stroke-linejoin="round"/><path d="M88.85,574.27 C88.85,581.04 86.77,585.21 81.56,586.25" transform="translate(0.00,-0.00)" fill="none" stroke="#0a0a0a" stroke-width="1.6" stroke-linecap="round" stroke-linejoin="round"/><path d="M88.85,574.27 C88.85,581.04 86.77,585.21 81.56,586.25" transform="translate(0.27,-0.46)" fill="none" stroke="#0a0a0a" stroke-width="1.6" stroke-linecap="round" stroke-linejoin="round"/><path d="M88.85,574.27 C88.85,581.04 86.77,585.21 81.56,586.25" transform="translate(0.53,-0.92)" fill="none" stroke="#0a0a0a" stroke-width="1.6" stroke-linecap="round" stroke-linejoin="round"/><path d="M88.85,574.27 C88.85,581.04 86.77,585.21 81.56,586.25" transform="translate(0.80,-1.39)" fill="none" stroke="#0a0a0a" stroke-width="1.6" stroke-linecap="round" stroke-linejoin="round"/><path d="M84.69,571.67 C82.60,574.79 80.00,577.40 78.96,578.96 L84.17,579.58" transform="translate(-0.80,1.39)" fill="none" stroke="#0a0a0a" stroke-width="1.6" stroke-linecap="round" stroke-linejoin="round"/><path d="M84.69,571.67 C82.60,574.79 80.00,577.40 78.96,578.96 L84.17,579.58" transform="translate(-0.53,0.92)" fill="none" stroke="#0a0a0a" stroke-width="1.6" stroke-linecap="round" stroke-linejoin="round"/><path d="M84.69,571.67 C82.60,574.79 80.00,577.40 78.96,578.96 L84.17,579.58" transform="translate(-0.27,0.46)" fill="none" stroke="#0a0a0a" stroke-width="1.6" stroke-linecap="round" stroke-linejoin="round"/><path d="M84.69,571.67 C82.60,574.79 80.00,577.40 78.96,578.96 L84.17,579.58" transform="translate(0.00,-0.00)" fill="none" stroke="#0a0a0a" stroke-width="1.6" stroke-linecap="round" stroke-linejoin="round"/><path d="M84.69,571.67 C82.60,574.79 80.00,577.40 78.96,578.96 L84.17,579.58" transform="translate(0.27,-0.46)" fill="none" stroke="#0a0a0a" stroke-width="1.6" stroke-linecap="round" stroke-linejoin="round"/><path d="M84.69,571.67 C82.60,574.79 80.00,577.40 78.96,578.96 L84.17,579.58" transform="translate(0.53,-0.92)" fill="none" stroke="#0a0a0a" stroke-width="1.6" stroke-linecap="round" stroke-linejoin="round"/><path d="M84.69,571.67 C82.60,574.79 80.00,577.40 78.96,578.96 L84.17,579.58" transform="translate(0.80,-1.39)" fill="none" stroke="#0a0a0a" stroke-width="1.6" stroke-linecap="round" stroke-linejoin="round"/><path d="M78.75,564.90 L77.08,578.12" transform="translate(-0.80,1.39)" fill="none" stroke="#0a0a0a" stroke-width="1.6" stroke-linecap="round" stroke-linejoin="round"/><path d="M78.75,564.90 L77.08,578.12" transform="translate(-0.53,0.92)" fill="none" stroke="#0a0a0a" stroke-width="1.6" stroke-linecap="round" stroke-linejoin="round"/><path d="M78.75,564.90 L77.08,578.12" transform="translate(-0.27,0.46)" fill="none" stroke="#0a0a0a" stroke-width="1.6" stroke-linecap="round" stroke-linejoin="round"/><path d="M78.75,564.90 L77.08,578.12" transform="translate(0.00,-0.00)" fill="none" stroke="#0a0a0a" stroke-width="1.6" stroke-linecap="round" stroke-linejoin="round"/><path d="M78.75,564.90 L77.08,578.12" transform="translate(0.27,-0.46)" fill="none" stroke="#0a0a0a" stroke-width="1.6" stroke-linecap="round" stroke-linejoin="round"/><path d="M78.75,564.90 L77.08,578.12" transform="translate(0.53,-0.92)" fill="none" stroke="#0a0a0a" stroke-width="1.6" stroke-linecap="round" stroke-linejoin="round"/><path d="M78.75,564.90 L77.08,578.12" transform="translate(0.80,-1.39)" fill="none" stroke="#0a0a0a" stroke-width="1.6" stroke-linecap="round" stroke-linejoin="round"/><path d="M75.00,574.27 C76.04,580.52 73.23,585.21 68.54,586.25" transform="translate(-0.80,1.39)" fill="none" stroke="#0a0a0a" stroke-width="1.6" stroke-linecap="round" stroke-linejoin="round"/><path d="M75.00,574.27 C76.04,580.52 73.23,585.21 68.54,586.25" transform="translate(-0.53,0.92)" fill="none" stroke="#0a0a0a" stroke-width="1.6" stroke-linecap="round" stroke-linejoin="round"/><path d="M75.00,574.27 C76.04,580.52 73.23,585.21 68.54,586.25" transform="translate(-0.27,0.46)" fill="none" stroke="#0a0a0a" stroke-width="1.6" stroke-linecap="round" stroke-linejoin="round"/><path d="M75.00,574.27 C76.04,580.52 73.23,585.21 68.54,586.25" transform="translate(0.00,-0.00)" fill="none" stroke="#0a0a0a" stroke-width="1.6" stroke-linecap="round" stroke-linejoin="round"/><path d="M75.00,574.27 C76.04,580.52 73.23,585.21 68.54,586.25" transform="translate(0.27,-0.46)" fill="none" stroke="#0a0a0a" stroke-width="1.6" stroke-linecap="round" stroke-linejoin="round"/><path d="M75.00,574.27 C76.04,580.52 73.23,585.21 68.54,586.25" transform="translate(0.53,-0.92)" fill="none" stroke="#0a0a0a" stroke-width="1.6" stroke-linecap="round" stroke-linejoin="round"/><path d="M75.00,574.27 C76.04,580.52 73.23,585.21 68.54,586.25" transform="translate(0.80,-1.39)" fill="none" stroke="#0a0a0a" stroke-width="1.6" stroke-linecap="round" stroke-linejoin="round"/><path d="M67.71,561.25 L65.62,576.35" transform="translate(-0.80,1.39)" fill="none" stroke="#0a0a0a" stroke-width="1.6" stroke-linecap="round" stroke-linejoin="round"/><path d="M67.71,561.25 L65.62,576.35" transform="translate(-0.53,0.92)" fill="none" stroke="#0a0a0a" stroke-width="1.6" stroke-linecap="round" stroke-linejoin="round"/><path d="M67.71,561.25 L65.62,576.35" transform="translate(-0.27,0.46)" fill="none" stroke="#0a0a0a" stroke-width="1.6" stroke-linecap="round" stroke-linejoin="round"/><path d="M67.71,561.25 L65.62,576.35" transform="translate(0.00,-0.00)" fill="none" stroke="#0a0a0a" stroke-width="1.6" stroke-linecap="round" stroke-linejoin="round"/><path d="M67.71,561.25 L65.62,576.35" transform="translate(0.27,-0.46)" fill="none" stroke="#0a0a0a" stroke-width="1.6" stroke-linecap="round" stroke-linejoin="round"/><path d="M67.71,561.25 L65.62,576.35" transform="translate(0.53,-0.92)" fill="none" stroke="#0a0a0a" stroke-width="1.6" stroke-linecap="round" stroke-linejoin="round"/><path d="M67.71,561.25 L65.62,576.35" transform="translate(0.80,-1.39)" fill="none" stroke="#0a0a0a" stroke-width="1.6" stroke-linecap="round" stroke-linejoin="round"/><path d="M63.54,572.19 C64.90,582.60 56.56,586.46 45.62,586.46 C39.38,586.46 36.46,582.60 37.08,577.08" transform="translate(-0.80,1.39)" fill="none" stroke="#0a0a0a" stroke-width="1.6" stroke-linecap="round" stroke-linejoin="round"/><path d="M63.54,572.19 C64.90,582.60 56.56,586.46 45.62,586.46 C39.38,586.46 36.46,582.60 37.08,577.08" transform="translate(-0.53,0.92)" fill="none" stroke="#0a0a0a" stroke-width="1.6" stroke-linecap="round" stroke-linejoin="round"/><path d="M63.54,572.19 C64.90,582.60 56.56,586.46 45.62,586.46 C39.38,586.46 36.46,582.60 37.08,577.08" transform="translate(-0.27,0.46)" fill="none" stroke="#0a0a0a" stroke-width="1.6" stroke-linecap="round" stroke-linejoin="round"/><path d="M63.54,572.19 C64.90,582.60 56.56,586.46 45.62,586.46 C39.38,586.46 36.46,582.60 37.08,577.08" transform="translate(0.00,-0.00)" fill="none" stroke="#0a0a0a" stroke-width="1.6" stroke-linecap="round" stroke-linejoin="round"/><path d="M63.54,572.19 C64.90,582.60 56.56,586.46 45.62,586.46 C39.38,586.46 36.46,582.60 37.08,577.08" transform="translate(0.27,-0.46)" fill="none" stroke="#0a0a0a" stroke-width="1.6" stroke-linecap="round" stroke-linejoin="round"/><path d="M63.54,572.19 C64.90,582.60 56.56,586.46 45.62,586.46 C39.38,586.46 36.46,582.60 37.08,577.08" transform="translate(0.53,-0.92)" fill="none" stroke="#0a0a0a" stroke-width="1.6" stroke-linecap="round" stroke-linejoin="round"/><path d="M63.54,572.19 C64.90,582.60 56.56,586.46 45.62,586.46 C39.38,586.46 36.46,582.60 37.08,577.08" transform="translate(0.80,-1.39)" fill="none" stroke="#0a0a0a" stroke-width="1.6" stroke-linecap="round" stroke-linejoin="round"/><rect x="105.50" y="586.75" width="4.20" height="4.20" transform="rotate(45 107.60 588.85)" fill="#0a0a0a"/><rect x="109.88" y="585.71" width="4.20" height="4.20" transform="rotate(45 111.98 587.81)" fill="#0a0a0a"/><rect x="86.43" y="583.52" width="3.80" height="3.80" transform="rotate(45 88.33 585.42)" fill="#0a0a0a"/><rect x="90.60" y="583.52" width="3.80" height="3.80" transform="rotate(45 92.50 585.42)" fill="#0a0a0a"/><rect x="88.52" y="589.04" width="3.80" height="3.80" transform="rotate(45 90.42 590.94)" fill="#0a0a0a"/><rect x="71.43" y="563.10" width="3.60" height="3.60" transform="rotate(45 73.23 564.90)" fill="#0a0a0a"/><rect x="43.42" y="572.07" width="4.40" height="4.40" transform="rotate(45 45.62 574.27)" fill="#0a0a0a"/></svg>
<svg class="a" style="left:0;top:0" width="1280" height="720" viewBox="0 0 1280 720"><path d="M94.06,602.71 C88.85,601.35 82.60,603.44 81.25,607.92 C83.12,613.33 92.50,613.85 93.75,619.79" transform="translate(-0.80,1.39)" fill="none" stroke="#0a0a0a" stroke-width="1.6" stroke-linecap="round" stroke-linejoin="round"/><path d="M94.06,602.71 C88.85,601.35 82.60,603.44 81.25,607.92 C83.12,613.33 92.50,613.85 93.75,619.79" transform="translate(-0.53,0.92)" fill="none" stroke="#0a0a0a" stroke-width="1.6" stroke-linecap="round" stroke-linejoin="round"/><path d="M94.06,602.71 C88.85,601.35 82.60,603.44 81.25,607.92 C83.12,613.33 92.50,613.85 93.75,619.79" transform="translate(-0.27,0.46)" fill="none" stroke="#0a0a0a" stroke-width="1.6" stroke-linecap="round" stroke-linejoin="round"/><path d="M94.06,602.71 C88.85,601.35 82.60,603.44 81.25,607.92 C83.12,613.33 92.50,613.85 93.75,619.79" transform="translate(0.00,-0.00)" fill="none" stroke="#0a0a0a" stroke-width="1.6" stroke-linecap="round" stroke-linejoin="round"/><path d="M94.06,602.71 C88.85,601.35 82.60,603.44 81.25,607.92 C83.12,613.33 92.50,613.85 93.75,619.79" transform="translate(0.27,-0.46)" fill="none" stroke="#0a0a0a" stroke-width="1.6" stroke-linecap="round" stroke-linejoin="round"/><path d="M94.06,602.71 C88.85,601.35 82.60,603.44 81.25,607.92 C83.12,613.33 92.50,613.85 93.75,619.79" transform="translate(0.53,-0.92)" fill="none" stroke="#0a0a0a" stroke-width="1.6" stroke-linecap="round" stroke-linejoin="round"/><path d="M94.06,602.71 C88.85,601.35 82.60,603.44 81.25,607.92 C83.12,613.33 92.50,613.85 93.75,619.79" transform="translate(0.80,-1.39)" fill="none" stroke="#0a0a0a" stroke-width="1.6" stroke-linecap="round" stroke-linejoin="round"/><path d="M77.40,608.65 C71.67,607.60 71.15,613.33 75.83,613.85 C77.40,617.50 73.75,621.67 67.50,622.71" transform="translate(-0.80,1.39)" fill="none" stroke="#0a0a0a" stroke-width="1.6" stroke-linecap="round" stroke-linejoin="round"/><path d="M77.40,608.65 C71.67,607.60 71.15,613.33 75.83,613.85 C77.40,617.50 73.75,621.67 67.50,622.71" transform="translate(-0.53,0.92)" fill="none" stroke="#0a0a0a" stroke-width="1.6" stroke-linecap="round" stroke-linejoin="round"/><path d="M77.40,608.65 C71.67,607.60 71.15,613.33 75.83,613.85 C77.40,617.50 73.75,621.67 67.50,622.71" transform="translate(-0.27,0.46)" fill="none" stroke="#0a0a0a" stroke-width="1.6" stroke-linecap="round" stroke-linejoin="round"/><path d="M77.40,608.65 C71.67,607.60 71.15,613.33 75.83,613.85 C77.40,617.50 73.75,621.67 67.50,622.71" transform="translate(0.00,-0.00)" fill="none" stroke="#0a0a0a" stroke-width="1.6" stroke-linecap="round" stroke-linejoin="round"/><path d="M77.40,608.65 C71.67,607.60 71.15,613.33 75.83,613.85 C77.40,617.50 73.75,621.67 67.50,622.71" transform="translate(0.27,-0.46)" fill="none" stroke="#0a0a0a" stroke-width="1.6" stroke-linecap="round" stroke-linejoin="round"/><path d="M77.40,608.65 C71.67,607.60 71.15,613.33 75.83,613.85 C77.40,617.50 73.75,621.67 67.50,622.71" transform="translate(0.53,-0.92)" fill="none" stroke="#0a0a0a" stroke-width="1.6" stroke-linecap="round" stroke-linejoin="round"/><path d="M77.40,608.65 C71.67,607.60 71.15,613.33 75.83,613.85 C77.40,617.50 73.75,621.67 67.50,622.71" transform="translate(0.80,-1.39)" fill="none" stroke="#0a0a0a" stroke-width="1.6" stroke-linecap="round" stroke-linejoin="round"/><path d="M68.75,603.75 L67.08,616.67" transform="translate(-0.80,1.39)" fill="none" stroke="#0a0a0a" stroke-width="1.6" stroke-linecap="round" stroke-linejoin="round"/><path d="M68.75,603.75 L67.08,616.67" transform="translate(-0.53,0.92)" fill="none" stroke="#0a0a0a" stroke-width="1.6" stroke-linecap="round" stroke-linejoin="round"/><path d="M68.75,603.75 L67.08,616.67" transform="translate(-0.27,0.46)" fill="none" stroke="#0a0a0a" stroke-width="1.6" stroke-linecap="round" stroke-linejoin="round"/><path d="M68.75,603.75 L67.08,616.67" transform="translate(0.00,-0.00)" fill="none" stroke="#0a0a0a" stroke-width="1.6" stroke-linecap="round" stroke-linejoin="round"/><path d="M68.75,603.75 L67.08,616.67" transform="translate(0.27,-0.46)" fill="none" stroke="#0a0a0a" stroke-width="1.6" stroke-linecap="round" stroke-linejoin="round"/><path d="M68.75,603.75 L67.08,616.67" transform="translate(0.53,-0.92)" fill="none" stroke="#0a0a0a" stroke-width="1.6" stroke-linecap="round" stroke-linejoin="round"/><path d="M68.75,603.75 L67.08,616.67" transform="translate(0.80,-1.39)" fill="none" stroke="#0a0a0a" stroke-width="1.6" stroke-linecap="round" stroke-linejoin="round"/><path d="M65.21,613.33 C66.67,621.67 61.77,624.27 55.52,623.23 C51.35,622.50 52.40,617.50 56.04,615.94" transform="translate(-0.80,1.39)" fill="none" stroke="#0a0a0a" stroke-width="1.6" stroke-linecap="round" stroke-linejoin="round"/><path d="M65.21,613.33 C66.67,621.67 61.77,624.27 55.52,623.23 C51.35,622.50 52.40,617.50 56.04,615.94" transform="translate(-0.53,0.92)" fill="none" stroke="#0a0a0a" stroke-width="1.6" stroke-linecap="round" stroke-linejoin="round"/><path d="M65.21,613.33 C66.67,621.67 61.77,624.27 55.52,623.23 C51.35,622.50 52.40,617.50 56.04,615.94" transform="translate(-0.27,0.46)" fill="none" stroke="#0a0a0a" stroke-width="1.6" stroke-linecap="round" stroke-linejoin="round"/><path d="M65.21,613.33 C66.67,621.67 61.77,624.27 55.52,623.23 C51.35,622.50 52.40,617.50 56.04,615.94" transform="translate(0.00,-0.00)" fill="none" stroke="#0a0a0a" stroke-width="1.6" stroke-linecap="round" stroke-linejoin="round"/><path d="M65.21,613.33 C66.67,621.67 61.77,624.27 55.52,623.23 C51.35,622.50 52.40,617.50 56.04,615.94" transform="translate(0.27,-0.46)" fill="none" stroke="#0a0a0a" stroke-width="1.6" stroke-linecap="round" stroke-linejoin="round"/><path d="M65.21,613.33 C66.67,621.67 61.77,624.27 55.52,623.23 C51.35,622.50 52.40,617.50 56.04,615.94" transform="translate(0.53,-0.92)" fill="none" stroke="#0a0a0a" stroke-width="1.6" stroke-linecap="round" stroke-linejoin="round"/><path d="M65.21,613.33 C66.67,621.67 61.77,624.27 55.52,623.23 C51.35,622.50 52.40,617.50 56.04,615.94" transform="translate(0.80,-1.39)" fill="none" stroke="#0a0a0a" stroke-width="1.6" stroke-linecap="round" stroke-linejoin="round"/><rect x="88.84" y="624.77" width="4.20" height="4.20" transform="rotate(45 90.94 626.88)" fill="#0a0a0a"/><rect x="66.54" y="609.77" width="4.00" height="4.00" transform="rotate(45 68.54 611.77)" fill="#0a0a0a"/></svg>
<svg class="a" style="left:0;top:0" width="1280" height="720" viewBox="0 0 1280 720"><g transform="translate(35,628) scale(0.07424)"><path d="M1160,130 C1170,150 1165,180 1140,182 H885 M1100,130 V182 M1060,140 V182 M1020,140 V182 M960,150 C930,150 925,182 960,182 M905,150 V182 C905,215 870,215 860,200" fill="none" stroke="#111" stroke-width="22.90" stroke-linecap="round" stroke-linejoin="round"/><path d="M850,140 V182 H730 C712,182 708,160 715,145 M800,150 V182" fill="none" stroke="#111" stroke-width="22.90" stroke-linecap="round" stroke-linejoin="round"/><path d="M700,140 V182 H560 M665,150 V182 M630,150 V182 M590,145 V195 C590,215 560,215 550,205 M540,110 L470,160 C460,175 470,182 490,182 H440 C420,182 418,160 425,148" fill="none" stroke="#111" stroke-width="22.90" stroke-linecap="round" stroke-linejoin="round"/><path d="M368,120 V182" fill="none" stroke="#111" stroke-width="22.90" stroke-linecap="round" stroke-linejoin="round"/><path d="M330,130 C300,125 295,160 325,160 L320,185 M325,160 V188" fill="none" stroke="#111" stroke-width="22.90" stroke-linecap="round" stroke-linejoin="round"/><path d="M262,125 C230,130 235,165 262,162 M262,125 V188" fill="none" stroke="#111" stroke-width="22.90" stroke-linecap="round" stroke-linejoin="round"/><path d="M182,120 V182" fill="none" stroke="#111" stroke-width="22.90" stroke-linecap="round" stroke-linejoin="round"/><path d="M120,115 C90,120 90,150 115,150 C85,155 80,180 110,185 M120,115 V120" fill="none" stroke="#111" stroke-width="22.90" stroke-linecap="round" stroke-linejoin="round"/><circle cx="1100" cy="105" r="14.82" fill="#111"/><circle cx="1130" cy="105" r="14.82" fill="#111"/><circle cx="1115" cy="88" r="14.82" fill="#111"/><circle cx="800" cy="112" r="14.82" fill="#111"/><circle cx="770" cy="112" r="14.82" fill="#111"/><circle cx="785" cy="96" r="14.82" fill="#111"/><circle cx="620" cy="112" r="14.82" fill="#111"/><circle cx="650" cy="112" r="14.82" fill="#111"/><circle cx="635" cy="96" r="14.82" fill="#111"/><circle cx="400" cy="150" r="14.82" fill="#111"/><circle cx="400" cy="178" r="14.82" fill="#111"/></g></svg>
<div class="t" style="left:21.00px;top:665.78px;font-size:9.80px;line-height:9.80px;color:#222222;font-family:'Liberation Serif',serif;font-weight:bold;letter-spacing:-0.373px;">www.idehpardazanjavan.com</div>
</body></html>
